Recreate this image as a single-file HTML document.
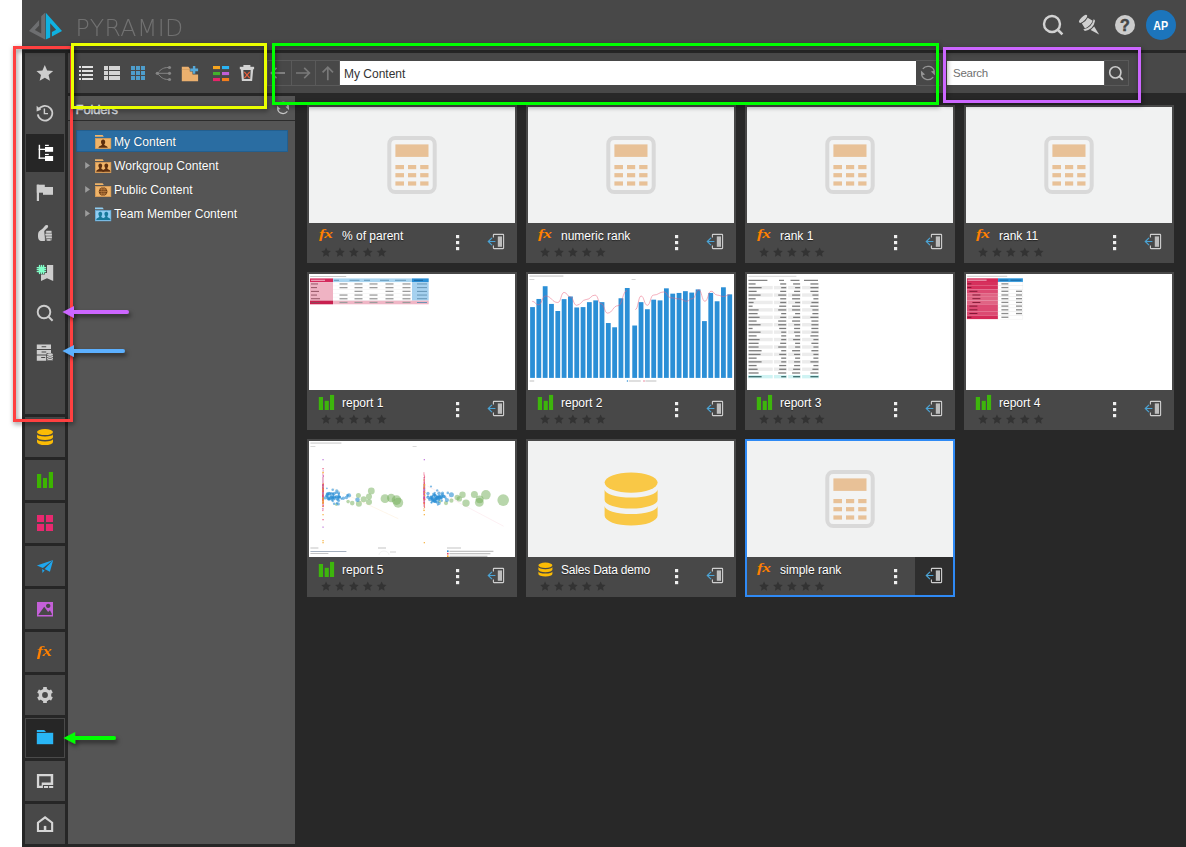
<!DOCTYPE html>
<html lang="en">
<head>
<meta charset="utf-8">
<title>Pyramid - Content Manager</title>
<style>
*{box-sizing:border-box;margin:0;padding:0}
html,body{width:1186px;height:847px;overflow:hidden;background:#fff}
body{position:relative;font-family:"Liberation Sans",sans-serif;font-size:13px;color:#fff}
svg{position:absolute;overflow:visible}
#app{position:absolute;left:22px;top:0;width:1164px;height:847px;background:#262626}
#content{position:absolute;left:295px;top:93px;width:891px;height:754px;background:#282828}
#content .card{margin-left:-295px;margin-top:-93px}
#hdr{position:absolute;left:22px;top:0;width:1164px;height:50px;background:#484848}
#hdr .brand{position:absolute;left:53.6px;top:11.7px;font-family:"DejaVu Sans","Liberation Sans",sans-serif;font-weight:200;font-size:23.6px;line-height:32px;color:#727272;letter-spacing:.4px;opacity:.999;will-change:opacity;white-space:nowrap}
#hdr .help{position:absolute;left:1093px;top:15px;width:20px;height:20px;border-radius:50%;background:#ccc;color:#454545;font-weight:bold;font-size:16px;line-height:22px;text-align:center;-webkit-text-stroke:.5px #454545}
#hdr .av{position:absolute;left:1124px;top:10px;width:30px;height:30px;border-radius:50%;background:#1c75bc;color:#fff;font-weight:bold;font-size:12.4px;line-height:33px;text-align:center}
#hdr .av span{display:inline-block;transform:scaleX(.86)}
#tb{position:absolute;left:68px;top:53px;width:1118px;height:40px;background:#484848}
.nav{position:absolute;top:7px;height:26px;border:1px solid #5a5a5a}
.inp{position:absolute;top:8px;height:24px;background:#fff;color:#333;font-size:12px;line-height:26.8px;padding-left:4px;white-space:nowrap}
#fold{position:absolute;left:68px;top:96px;width:227px;height:748px;background:#555}
#fold .hd{position:absolute;left:0;top:0;width:227px;height:25px;border-bottom:1px solid #2c2c2c}
#fold .hd span{position:absolute;left:7.6px;top:6px;font-size:13px;line-height:16px;color:#e4e8ee;-webkit-text-stroke:.35px #e4e8ee;letter-spacing:-.15px}
.cell{position:absolute;left:25px;width:40px;height:40px;background:#484848}
.cell.act{background:#262626;border:1px solid #4a4a4a}
.tr{position:absolute;left:0;width:227px;height:22px;font-size:12.1px;line-height:22px;color:#fff;white-space:nowrap;text-shadow:0 0 1px rgba(0,0,0,.4)}
.tr .lbl{position:absolute;left:46px;top:0}
.tr.sel{left:8px;width:212px;background:#2a6da2;border:1px solid #235f8f}
.tr.sel .lbl{left:37px;top:0}
.box{position:absolute;border:3px solid;filter:drop-shadow(1px 2.5px 2.6px rgba(0,0,0,.5))}
.card{position:absolute;width:210px;height:158px;background:#484848}
.card .th{position:absolute;left:2px;top:2px;width:206px;height:116px;background:#f1f2f2;overflow:hidden}
.card .th.w{background:#fff}
.card .nm{position:absolute;left:35px;top:123px;font-size:12px;line-height:16px;color:#fff;white-space:nowrap;text-shadow:0 1px 1px rgba(0,0,0,.5)}
.card .fx{position:absolute;left:12.4px;top:120.8px;font-family:"Liberation Serif",serif;font-style:italic;font-weight:bold;font-size:13.5px;line-height:16px;color:#ff8000;letter-spacing:-.3px;white-space:nowrap;transform:scaleX(1.28);transform-origin:0 0}
.card .opn{position:absolute;left:170px;top:118px;width:38px;height:38px;background:#2e2e2e}
.card .ring{position:absolute;left:0;top:0;width:210px;height:158px;border:2px solid #2f8af5}
</style>
</head>
<body>
<div id="app"></div>
<header id="hdr">
<span class="brand">PYRAMID</span>
<div class="help">?</div>
<div class="av"><span>AP</span></div>
</header>
<svg id="hdricons" style="left:0;top:0" width="1186" height="52" viewBox="0 0 1186 52">
<polygon fill="#6d6e70" points="45.0,12.85 41.2,16.15 41.2,33.4 34.9,30.1 39.1,25.4 39.1,19.9 29.0,31.0 45.0,39.5"/>
<polygon fill="#0fb1e0" points="45.8,12.85 62.0,31.0 51.9,36.45 51.9,31.9 56.1,29.85 50.2,23.2 50.2,37.4 45.8,39.5"/>
<circle cx="1052" cy="24" r="8" fill="none" stroke="#d2d2d2" stroke-width="2.4"/>
<line x1="1058" y1="30" x2="1062.4" y2="34.4" stroke="#d2d2d2" stroke-width="2.6"/>
<g fill="#d0d0d0" transform="translate(1088.4,24.2) rotate(-45) scale(1.18,1.02)">
<ellipse cx="0" cy="-7.4" rx="4.5" ry="2"/>
<path d="M-3.5,-5 Q0,-3.6 3.5,-5 L4.6,0.6 Q0,2.8 -4.6,0.6 Z"/>
<path d="M-6.3,0.2 Q0,5 6.3,0.2 L6.1,2.2 Q0,7 -6.1,2.2 Z"/>
<path d="M-2.1,5.6 L2.1,5.6 L0.2,14.6 Z"/>
</g>
</svg>
<nav id="side">
<div class="cell" style="top:53px;height:361px"></div>
<div class="cell act" style="left:26px;top:134px;width:38px;height:38px;border:0"></div>
<div class="cell" style="top:417px"></div>
<div class="cell" style="top:460px"></div>
<div class="cell" style="top:503px"></div>
<div class="cell" style="top:546px"></div>
<div class="cell" style="top:589px"></div>
<div class="cell" style="top:632px"></div>
<div class="cell" style="top:675px"></div>
<div class="cell act" style="top:718px"></div>
<div class="cell" style="top:761px"></div>
<div class="cell" style="top:804px"></div>
<svg id="sideicons" style="left:0;top:0" width="70" height="847" viewBox="0 0 70 847">
<!-- favorites -->
<polygon fill="#cdcdcd" points="44.80,64.90 47.15,70.46 53.17,70.98 48.60,74.94 49.97,80.82 44.80,77.70 39.63,80.82 41.00,74.94 36.43,70.98 42.45,70.46"/>
<!-- recent -->
<g fill="none" stroke="#cdcdcd" stroke-width="1.8">
<path d="M38.8,109.4 A7.3,7.3 0 1 1 37.8,114.4"/>
<path d="M44.4,108.6 V113.6 H48" stroke-width="1.4"/>
</g>
<polygon fill="#cdcdcd" points="36.6,105.8 41.2,109.8 36.6,111.4"/>
<!-- tree -->
<g fill="#fff">
<rect x="38.7" y="144.8" width="1.4" height="14"/>
<rect x="38.7" y="148.7" width="6.5" height="1.3"/>
<rect x="38.7" y="157.5" width="6.5" height="1.3"/>
<rect x="45" y="144.8" width="3.8" height="1.2"/>
<rect x="45" y="147" width="8.1" height="4.8"/>
<rect x="45" y="153.9" width="3.8" height="1.2"/>
<rect x="45" y="156" width="8.1" height="5"/>
</g>
<!-- flag -->
<g fill="#cdcdcd">
<rect x="36.8" y="184.7" width="2.2" height="16.3"/>
<rect x="36.8" y="184.7" width="8" height="8"/>
<rect x="43" y="187" width="10" height="7.8"/>
</g>
<!-- thumbs -->
<g fill="#cdcdcd">
<path d="M46.6,224.9 C47.6,224.9 48.3,225.4 48.1,226.4 C47.9,227.4 47.2,228.2 45.9,229.3 C44.8,230.2 44.3,230.8 44.3,231.8 L44.9,237.8 L44.9,241 L40.8,240.9 C39.2,240.4 38.3,239.4 38.1,237.4 C37.9,235.6 38,233.8 38.4,232.5 C39,231.2 40,230.6 41.2,229.8 C42.6,228.8 43.6,227.8 44.2,226.8 C44.8,225.8 45.4,224.9 46.6,224.9 Z"/>
<rect x="45.6" y="230.4" width="6.4" height="10.4" rx="1.2" fill="#7e7e7e"/>
<rect x="46.1" y="231" width="5.3" height="1.7" rx=".6"/>
<rect x="45.3" y="233.7" width="6.6" height="1.7" rx=".6"/>
<rect x="46.1" y="236.6" width="5.8" height="1.5" rx=".6"/>
<rect x="47" y="239.2" width="3.6" height="1.5" rx=".6"/>
</g>
<!-- bookmark -->
<polygon fill="#cdcdcd" points="47,264.9 53.2,264.9 53.2,281 47,278.2 41,281 41,274.6 44.9,274.6 44.9,272.9 47,272.9"/>
<g fill="#80ffc8">
<rect x="38.7" y="266.7" width="5.6" height="5.6"/>
<rect x="36.7" y="267" width="9.4" height="1.3"/>
<rect x="36.7" y="268.85" width="9.4" height="1.3"/>
<rect x="36.7" y="270.9" width="9.4" height="1.3"/>
<rect x="38.9" y="264.9" width="1.3" height="9.2"/>
<rect x="40.85" y="264.9" width="1.3" height="9.2"/>
<rect x="42.9" y="264.9" width="1.3" height="9.2"/>
</g>
<!-- search -->
<circle cx="44" cy="312" r="6.3" fill="none" stroke="#cdcdcd" stroke-width="1.9"/>
<line x1="48.6" y1="316.8" x2="52.6" y2="320.8" stroke="#cdcdcd" stroke-width="2"/>
<!-- data source mgr -->
<g fill="#cdcdcd">
<path d="M36.8,344.5 h14.2 v4.4 h-14.2 z M41.6,346.2 v1 h4.6 v-1 z" fill-rule="evenodd"/>
<path d="M36.8,350 h14.2 v3 h-4.4 v1.4 h-9.8 z M41.6,351.6 v1 h4.6 v-1 z" fill-rule="evenodd"/>
<path d="M36.8,355.5 h9.4 v5.3 h-9.4 z M41.2,357 v1 h4 v-1 z" fill-rule="evenodd"/>
<ellipse cx="50" cy="354.6" rx="3" ry="1.3"/>
<path d="M47,355.6 q3,1.8 6,0 v1.5 q-3,1.8 -6,0 z"/>
<path d="M47,357.8 q3,1.8 6,0 v1.5 q-3,1.8 -6,0 z"/>
<path d="M47,360 q3,1.8 6,0 v0.2 q-3,1.8 -6,0 z"/>
</g>
<!-- db yellow -->
<g fill="#fbbc05" transform="translate(37,429) scale(0.3019)">
<ellipse cx="26.5" cy="10.1" rx="26.5" ry="10.1"/>
<path d="M0,17 A26.5,8 0 0 0 53,17 L53,27.5 A26.5,8.6 0 0 1 0,27.5 Z"/>
<path d="M0,33.5 A26.5,8 0 0 0 53,33.5 L53,43 A26.5,10.1 0 0 1 0,43 Z"/>
</g>
<!-- bars green -->
<g fill="#3cb400">
<rect x="37" y="474" width="4.2" height="14"/>
<rect x="43" y="478" width="4" height="10"/>
<rect x="48.8" y="472" width="4.2" height="16"/>
</g>
<!-- grid pink -->
<g fill="#e8296f">
<rect x="37" y="515" width="7" height="7"/>
<rect x="46" y="515" width="7" height="7"/>
<rect x="37" y="524" width="7" height="7"/>
<rect x="46" y="524" width="7" height="7"/>
</g>
<!-- plane -->
<g fill="#1ea7f0">
<path d="M36.9,565.5 L53.2,559.9 L42.9,567.9 Z"/>
<path d="M53.2,559.9 L49.9,571.8 L44.6,568.9 Z"/>
<path d="M42.1,568.9 L44.6,570.4 L42.5,572.9 Z"/>
</g>
<!-- image -->
<path fill="#c460d8" fill-rule="evenodd" d="M37,602 h16 v14.4 h-16 z M38.2,614.9 L44.2,606.8 L48.1,612 L49.9,610.2 L51.8,613.8 V614.9 Z M48.2,603.7 a2.2,2.2 0 1 0 0.01,0 z"/>
<!-- gear -->
<g transform="translate(45,695)">
<circle r="4.6" fill="none" stroke="#cdcdcd" stroke-width="3.4"/>
<g fill="#cdcdcd">
<rect x="-1.9" y="-8" width="3.8" height="16" rx=".6"/>
<rect x="-1.9" y="-8" width="3.8" height="16" rx=".6" transform="rotate(60)"/>
<rect x="-1.9" y="-8" width="3.8" height="16" rx=".6" transform="rotate(120)"/>
</g>
<circle r="2.9" fill="#484848"/>
</g>
<!-- folder blue -->
<g fill="#29b6f6">
<path d="M36.8,730 h7.4 l1.8,2 h-9.2 z"/>
<rect x="36.8" y="732.8" width="16.4" height="11.4"/>
</g>
<!-- present -->
<path fill="#d6d6d6" fill-rule="evenodd" d="M36.9,774 H53.2 V785 H42.9 V788 H36.9 Z M39.2,776.3 H50.7 V782.6 H41.7 V785.7 H39.2 Z"/>
<rect x="44" y="786" width="4.1" height="2" fill="#d6d6d6"/>
<rect x="49.1" y="786" width="4.1" height="2" fill="#d6d6d6"/>
<!-- home -->
<path fill="none" stroke="#d6d6d6" stroke-width="2.1" d="M37.95,831 V822.7 L45.05,817.4 L52.15,822.7 V831 Z"/>
<rect x="43.8" y="825.9" width="2.5" height="5.2" fill="#d6d6d6"/>
</svg>
<span class="sfx" style="position:absolute;left:36.8px;top:641.6px;font-family:'Liberation Serif',serif;font-style:italic;font-weight:bold;font-size:14.5px;line-height:18px;color:#ff8000;letter-spacing:-.3px;white-space:nowrap;transform:scaleX(1.28);transform-origin:0 0">fx</span>
</nav>
<div id="tb">
<div class="nav" style="left:199px;width:25px"></div>
<div class="nav" style="left:223px;width:25px"></div>
<div class="nav" style="left:247px;width:25px"></div>
<div class="inp" style="left:272px;width:576px">My Content</div>
<div class="nav" style="left:848px;width:25px;border-left:0"></div>
<div class="inp" style="left:879px;width:157px;color:#707070;padding-left:6px;font-size:11.5px;letter-spacing:-.25px;line-height:25px">Search</div>
<div class="nav" style="left:1036px;width:25px"></div>
</div>
<svg id="tbicons" style="left:0;top:53px" width="1186" height="40" viewBox="0 53 1186 40">
<!-- list -->
<g fill="#e2e2e2">
<rect x="79" y="66" width="2" height="2"/><rect x="82" y="66" width="11" height="2"/>
<rect x="79" y="70" width="2" height="2"/><rect x="82" y="70" width="11" height="2"/>
<rect x="79" y="74" width="2" height="2"/><rect x="82" y="74" width="11" height="2"/>
<rect x="79" y="78" width="2" height="2"/><rect x="82" y="78" width="11" height="2"/>
</g>
<!-- details -->
<g fill="#d4d4d4">
<rect x="104" y="66" width="4" height="4"/><rect x="109" y="66" width="11" height="4"/>
<rect x="104" y="71" width="4" height="4"/><rect x="109" y="71" width="11" height="4"/>
<rect x="104" y="76" width="4" height="4"/><rect x="109" y="76" width="11" height="4"/>
</g>
<!-- thumbnails -->
<g fill="#4e9dcb">
<rect x="131" y="66" width="4" height="4"/><rect x="136" y="66" width="4" height="4"/><rect x="141" y="66" width="4" height="4"/>
<rect x="131" y="71" width="4" height="4"/><rect x="136" y="71" width="4" height="4"/><rect x="141" y="71" width="4" height="4"/>
<rect x="131" y="76" width="4" height="4"/><rect x="136" y="76" width="4" height="4"/><rect x="141" y="76" width="4" height="4"/>
</g>
<!-- structure -->
<g fill="none" stroke="#858585" stroke-width="1">
<path d="M157.4,73.3 H168"/>
<path d="M157.4,73.3 C161,69 163.5,67.6 168,67.5"/>
<path d="M157.4,73.3 C161,77.6 163.5,79.4 168,79.5"/>
</g>
<g fill="#858585">
<circle cx="157.3" cy="73.3" r="1.6"/><circle cx="169.5" cy="67.5" r="1.6"/><circle cx="169.5" cy="73.3" r="1.6"/><circle cx="169.5" cy="79.5" r="1.6"/>
</g>
<!-- new folder -->
<path fill="#ebb06e" d="M181.8,66.7 H188.4 L189.8,68.4 V71.6 H192.5 V74.6 H198.1 V81.2 H181.8 Z"/>
<rect x="181.8" y="69.1" width="8" height=".6" fill="#cf9a5c"/>
<path fill="#56a8d8" d="M192.9,66 H195.3 V68.6 H198.1 V71.2 H195.3 V73.8 H192.9 V71.2 H190.2 V68.6 H192.9 Z"/>
<!-- colour tags -->
<rect x="213" y="66" width="7" height="3.1" fill="#f6a51e"/><rect x="222" y="66" width="7.1" height="3.1" fill="#2ab4f5"/>
<rect x="213" y="72" width="7" height="3.1" fill="#45b02c"/><rect x="222" y="72" width="7.1" height="3.1" fill="#c15fd6"/>
<rect x="213" y="78" width="7" height="3.1" fill="#e8256a"/><rect x="222" y="78" width="7.1" height="3.1" fill="#f57d1c"/>
<!-- delete -->
<rect x="243.4" y="65" width="7" height="2.4" fill="#d2d2d2"/>
<rect x="239.8" y="66.8" width="14.3" height="2.4" fill="#d2d2d2"/>
<path d="M240.7,68.6 H253.3 L252.1,81.1 H241.9 Z" fill="#d2d2d2"/>
<path d="M243.3,70 H250.7 L250.2,79 H243.8 Z" fill="#454545"/>
<path d="M244.3,71.8 L249.7,78.2 M249.7,71.8 L244.3,78.2" stroke="#f0603c" stroke-width="1.1" fill="none"/>
<!-- nav arrows -->
<g fill="none" stroke="#797979" stroke-width="1.7">
<path stroke="#929292" d="M271.6,73 H285 M276.6,67.8 L271.4,73 L276.6,78.2"/>
<path d="M296,73 H309.2 M304.2,67.8 L309.4,73 L304.2,78.2"/>
<path d="M327.8,80.2 V67.2 M322.6,72.4 L327.8,67.2 L333,72.4"/>
</g>
<!-- refresh -->
<g fill="none" stroke="#969696" stroke-width="1.3">
<path d="M922.80,68.90 A6.60,6.60 0 0 1 934.30,71.00"/>
<path d="M933.20,77.10 A6.60,6.60 0 0 1 921.70,75.00"/>
</g>
<polygon fill="#969696" points="930.90,71.60 934.90,70.40 935.10,75.40"/>
<polygon fill="#969696" points="925.10,74.40 921.10,75.60 920.90,70.60"/>
<!-- search btn -->
<circle cx="1115.3" cy="72.4" r="5.6" fill="none" stroke="#cbcbcb" stroke-width="1.6"/>
<line x1="1119.3" y1="76.4" x2="1122.8" y2="79.9" stroke="#cbcbcb" stroke-width="1.9"/>
</svg>
<aside id="fold">
<div class="hd"><span>Folders</span></div>
<div class="tr sel" style="top:34px"><span class="lbl">My Content</span></div>
<div class="tr" style="top:58.5px"><span class="lbl">Workgroup Content</span></div>
<div class="tr" style="top:82.5px"><span class="lbl">Public Content</span></div>
<div class="tr" style="top:106.5px"><span class="lbl">Team Member Content</span></div>
</aside>
<svg id="foldicons" style="left:68px;top:96px" width="227" height="140" viewBox="68 96 227 140">
<!-- header refresh -->
<g fill="none" stroke="#c9c9c9" stroke-width="1.2">
<path d="M278.59,104.42 A5.60,5.60 0 0 1 288.35,106.20"/>
<path d="M287.41,111.38 A5.60,5.60 0 0 1 277.65,109.60"/>
</g>
<polygon fill="#c9c9c9" points="285.46,106.71 288.85,105.69 289.02,109.94"/>
<polygon fill="#c9c9c9" points="280.54,109.09 277.15,110.11 276.98,105.86"/>
<!-- expanders -->
<g fill="#9c9c9c">
<polygon points="85.2,162 90,165.4 85.2,168.8"/>
<polygon points="85.2,186 90,189.4 85.2,192.8"/>
<polygon points="85.2,210 90,213.4 85.2,216.8"/>
</g>
<!-- folder: my content -->
<g>
<path fill="#f0b468" d="M95,135 H102.6 L103.8,136.8 H95 Z"/>
<rect x="95.3" y="138.3" width="15.6" height="10.4" fill="#f0b468" stroke="#de9c52" stroke-width=".6"/>
<path fill="#5c2e0e" d="M103.1,139.6 c1.4,0 2.1,1 2.1,2.3 c0,1 -0.5,1.9 -1,2.4 c0,0.8 0.6,1.2 1.8,1.6 c1.1,0.4 1.7,0.9 1.7,1.9 H98.5 c0,-1 0.6,-1.5 1.7,-1.9 c1.2,-0.4 1.8,-0.8 1.8,-1.6 c-0.5,-0.5 -1,-1.4 -1,-2.4 c0,-1.3 0.7,-2.3 2.1,-2.3 Z"/>
</g>
<!-- folder: workgroup -->
<g>
<path fill="#f0b468" d="M95,159.2 H102.6 L103.8,161 H95 Z"/>
<rect x="95.3" y="162.3" width="15.6" height="10.4" fill="#f0b468" stroke="#de9c52" stroke-width=".6"/>
<path fill="#5c2e0e" d="M100.3,163.6 c1.3,0 1.9,1 1.9,2.2 c0,1 -0.4,1.8 -0.9,2.3 c0,0.8 0.5,1.2 1.6,1.6 c1,0.4 1.5,0.9 1.5,2.1 H96.2 c0,-1.2 0.5,-1.7 1.5,-2.1 c1.1,-0.4 1.6,-0.8 1.6,-1.6 c-0.5,-0.5 -0.9,-1.3 -0.9,-2.3 c0,-1.2 0.6,-2.2 1.9,-2.2 Z"/>
<path fill="#5c2e0e" d="M106.3,163.6 c1.3,0 1.9,1 1.9,2.2 c0,1 -0.4,1.8 -0.9,2.3 c0,0.8 0.5,1.2 1.6,1.6 c1,0.4 1.5,0.9 1.5,2.1 H102.2 c0,-1.2 0.5,-1.7 1.5,-2.1 c1.1,-0.4 1.6,-0.8 1.6,-1.6 c-0.5,-0.5 -0.9,-1.3 -0.9,-2.3 c0,-1.2 0.6,-2.2 1.9,-2.2 Z"/>
</g>
<!-- folder: public -->
<g>
<path fill="#f0b468" d="M95,183.2 H102.6 L103.8,185 H95 Z"/>
<rect x="95.3" y="186.3" width="15.6" height="10.4" fill="#f0b468" stroke="#de9c52" stroke-width=".6"/>
<circle cx="103.1" cy="191.5" r="4.3" fill="#6a3a14"/>
<g fill="none" stroke="#c98a48" stroke-width=".6">
<ellipse cx="103.1" cy="191.5" rx="2" ry="4.3"/>
<path d="M98.8,191.5 H107.4 M103.1,187.2 V195.8 M99.6,189.2 H106.6 M99.6,193.8 H106.6"/>
</g>
</g>
<!-- folder: team -->
<g>
<path fill="#8fcdf2" d="M95,207.4 H102.6 L103.8,209.2 H95 Z"/>
<rect x="95.3" y="210.5" width="15.6" height="10.4" fill="#8fcdf2" stroke="#62b0e2" stroke-width=".6"/>
<path fill="#17799b" d="M100.3,211.8 c1.3,0 1.9,1 1.9,2.2 c0,1 -0.4,1.8 -0.9,2.3 c0,0.8 0.5,1.2 1.6,1.6 c1,0.4 1.5,0.9 1.5,2.1 H96.2 c0,-1.2 0.5,-1.7 1.5,-2.1 c1.1,-0.4 1.6,-0.8 1.6,-1.6 c-0.5,-0.5 -0.9,-1.3 -0.9,-2.3 c0,-1.2 0.6,-2.2 1.9,-2.2 Z"/>
<path fill="#17799b" d="M106.3,211.8 c1.3,0 1.9,1 1.9,2.2 c0,1 -0.4,1.8 -0.9,2.3 c0,0.8 0.5,1.2 1.6,1.6 c1,0.4 1.5,0.9 1.5,2.1 H102.2 c0,-1.2 0.5,-1.7 1.5,-2.1 c1.1,-0.4 1.6,-0.8 1.6,-1.6 c-0.5,-0.5 -0.9,-1.3 -0.9,-2.3 c0,-1.2 0.6,-2.2 1.9,-2.2 Z"/>
</g>
</svg>
<main id="content">
<div class="card" style="left:307px;top:105px"><div class="th"><svg style="left:0;top:0" width="206" height="116" viewBox="0 0 206 116"><rect x="80.3" y="31" width="45.4" height="54" rx="6" fill="#f3f4f4" stroke="#d9d9d9" stroke-width="4"/><rect x="86.4" y="37.4" width="33.1" height="12.5" fill="#e8c197"/><rect x="86.4" y="58.0" width="8.6" height="4.2" fill="#e8c197"/><rect x="99.0" y="58.0" width="8.2" height="4.2" fill="#e8c197"/><rect x="111.2" y="58.0" width="8.3" height="4.2" fill="#e8c197"/><rect x="86.4" y="66.1" width="8.6" height="4.2" fill="#e8c197"/><rect x="99.0" y="66.1" width="8.2" height="4.2" fill="#e8c197"/><rect x="111.2" y="66.1" width="8.3" height="4.2" fill="#e8c197"/><rect x="86.4" y="74.4" width="8.6" height="4.2" fill="#e8c197"/><rect x="99.0" y="74.4" width="8.2" height="4.2" fill="#e8c197"/><rect x="111.2" y="74.4" width="8.3" height="4.2" fill="#e8c197"/></svg></div><span class="fx">fx</span><span class="nm">% of parent</span><svg class="rate" style="left:0;top:0" width="100" height="158" viewBox="0 0 100 158"><g fill="#333"><polygon points="19.05,142.50 20.52,145.58 23.90,146.02 21.43,148.37 22.05,151.73 19.05,150.10 16.05,151.73 16.67,148.37 14.20,146.02 17.58,145.58"/><polygon points="32.95,142.50 34.42,145.58 37.80,146.02 35.33,148.37 35.95,151.73 32.95,150.10 29.95,151.73 30.57,148.37 28.10,146.02 31.48,145.58"/><polygon points="46.85,142.50 48.32,145.58 51.70,146.02 49.23,148.37 49.85,151.73 46.85,150.10 43.85,151.73 44.47,148.37 42.00,146.02 45.38,145.58"/><polygon points="60.75,142.50 62.22,145.58 65.60,146.02 63.13,148.37 63.75,151.73 60.75,150.10 57.75,151.73 58.37,148.37 55.90,146.02 59.28,145.58"/><polygon points="74.65,142.50 76.12,145.58 79.50,146.02 77.03,148.37 77.65,151.73 74.65,150.10 71.65,151.73 72.27,148.37 69.80,146.02 73.18,145.58"/></g></svg><svg class="act" style="left:0;top:0" width="210" height="158" viewBox="0 0 210 158"><g fill="#efefef"><rect x="149" y="130" width="3.2" height="3.2"/><rect x="149" y="136" width="3.2" height="3.2"/><rect x="149" y="142" width="3.2" height="3.2"/></g><path d="M186.4,132.6 V130 Q186.4,129.4 187,129.4 H196 Q196.6,129.4 196.6,130 V143 Q196.6,143.6 196,143.6 H187 Q186.4,143.6 186.4,143 V140.4" fill="none" stroke="#d0d0d0" stroke-width="1.1"/><rect x="190.8" y="131.4" width="4.2" height="10.4" fill="#bdbdbd"/><path d="M181.4,136.5 H188.4 M185,132.8 L181.3,136.5 L185,140.2" fill="none" stroke="#4ba3d4" stroke-width="1.2"/></svg></div>
<div class="card" style="left:526px;top:105px"><div class="th"><svg style="left:0;top:0" width="206" height="116" viewBox="0 0 206 116"><rect x="80.3" y="31" width="45.4" height="54" rx="6" fill="#f3f4f4" stroke="#d9d9d9" stroke-width="4"/><rect x="86.4" y="37.4" width="33.1" height="12.5" fill="#e8c197"/><rect x="86.4" y="58.0" width="8.6" height="4.2" fill="#e8c197"/><rect x="99.0" y="58.0" width="8.2" height="4.2" fill="#e8c197"/><rect x="111.2" y="58.0" width="8.3" height="4.2" fill="#e8c197"/><rect x="86.4" y="66.1" width="8.6" height="4.2" fill="#e8c197"/><rect x="99.0" y="66.1" width="8.2" height="4.2" fill="#e8c197"/><rect x="111.2" y="66.1" width="8.3" height="4.2" fill="#e8c197"/><rect x="86.4" y="74.4" width="8.6" height="4.2" fill="#e8c197"/><rect x="99.0" y="74.4" width="8.2" height="4.2" fill="#e8c197"/><rect x="111.2" y="74.4" width="8.3" height="4.2" fill="#e8c197"/></svg></div><span class="fx">fx</span><span class="nm">numeric rank</span><svg class="rate" style="left:0;top:0" width="100" height="158" viewBox="0 0 100 158"><g fill="#333"><polygon points="19.05,142.50 20.52,145.58 23.90,146.02 21.43,148.37 22.05,151.73 19.05,150.10 16.05,151.73 16.67,148.37 14.20,146.02 17.58,145.58"/><polygon points="32.95,142.50 34.42,145.58 37.80,146.02 35.33,148.37 35.95,151.73 32.95,150.10 29.95,151.73 30.57,148.37 28.10,146.02 31.48,145.58"/><polygon points="46.85,142.50 48.32,145.58 51.70,146.02 49.23,148.37 49.85,151.73 46.85,150.10 43.85,151.73 44.47,148.37 42.00,146.02 45.38,145.58"/><polygon points="60.75,142.50 62.22,145.58 65.60,146.02 63.13,148.37 63.75,151.73 60.75,150.10 57.75,151.73 58.37,148.37 55.90,146.02 59.28,145.58"/><polygon points="74.65,142.50 76.12,145.58 79.50,146.02 77.03,148.37 77.65,151.73 74.65,150.10 71.65,151.73 72.27,148.37 69.80,146.02 73.18,145.58"/></g></svg><svg class="act" style="left:0;top:0" width="210" height="158" viewBox="0 0 210 158"><g fill="#efefef"><rect x="149" y="130" width="3.2" height="3.2"/><rect x="149" y="136" width="3.2" height="3.2"/><rect x="149" y="142" width="3.2" height="3.2"/></g><path d="M186.4,132.6 V130 Q186.4,129.4 187,129.4 H196 Q196.6,129.4 196.6,130 V143 Q196.6,143.6 196,143.6 H187 Q186.4,143.6 186.4,143 V140.4" fill="none" stroke="#d0d0d0" stroke-width="1.1"/><rect x="190.8" y="131.4" width="4.2" height="10.4" fill="#bdbdbd"/><path d="M181.4,136.5 H188.4 M185,132.8 L181.3,136.5 L185,140.2" fill="none" stroke="#4ba3d4" stroke-width="1.2"/></svg></div>
<div class="card" style="left:745px;top:105px"><div class="th"><svg style="left:0;top:0" width="206" height="116" viewBox="0 0 206 116"><rect x="80.3" y="31" width="45.4" height="54" rx="6" fill="#f3f4f4" stroke="#d9d9d9" stroke-width="4"/><rect x="86.4" y="37.4" width="33.1" height="12.5" fill="#e8c197"/><rect x="86.4" y="58.0" width="8.6" height="4.2" fill="#e8c197"/><rect x="99.0" y="58.0" width="8.2" height="4.2" fill="#e8c197"/><rect x="111.2" y="58.0" width="8.3" height="4.2" fill="#e8c197"/><rect x="86.4" y="66.1" width="8.6" height="4.2" fill="#e8c197"/><rect x="99.0" y="66.1" width="8.2" height="4.2" fill="#e8c197"/><rect x="111.2" y="66.1" width="8.3" height="4.2" fill="#e8c197"/><rect x="86.4" y="74.4" width="8.6" height="4.2" fill="#e8c197"/><rect x="99.0" y="74.4" width="8.2" height="4.2" fill="#e8c197"/><rect x="111.2" y="74.4" width="8.3" height="4.2" fill="#e8c197"/></svg></div><span class="fx">fx</span><span class="nm">rank 1</span><svg class="rate" style="left:0;top:0" width="100" height="158" viewBox="0 0 100 158"><g fill="#333"><polygon points="19.05,142.50 20.52,145.58 23.90,146.02 21.43,148.37 22.05,151.73 19.05,150.10 16.05,151.73 16.67,148.37 14.20,146.02 17.58,145.58"/><polygon points="32.95,142.50 34.42,145.58 37.80,146.02 35.33,148.37 35.95,151.73 32.95,150.10 29.95,151.73 30.57,148.37 28.10,146.02 31.48,145.58"/><polygon points="46.85,142.50 48.32,145.58 51.70,146.02 49.23,148.37 49.85,151.73 46.85,150.10 43.85,151.73 44.47,148.37 42.00,146.02 45.38,145.58"/><polygon points="60.75,142.50 62.22,145.58 65.60,146.02 63.13,148.37 63.75,151.73 60.75,150.10 57.75,151.73 58.37,148.37 55.90,146.02 59.28,145.58"/><polygon points="74.65,142.50 76.12,145.58 79.50,146.02 77.03,148.37 77.65,151.73 74.65,150.10 71.65,151.73 72.27,148.37 69.80,146.02 73.18,145.58"/></g></svg><svg class="act" style="left:0;top:0" width="210" height="158" viewBox="0 0 210 158"><g fill="#efefef"><rect x="149" y="130" width="3.2" height="3.2"/><rect x="149" y="136" width="3.2" height="3.2"/><rect x="149" y="142" width="3.2" height="3.2"/></g><path d="M186.4,132.6 V130 Q186.4,129.4 187,129.4 H196 Q196.6,129.4 196.6,130 V143 Q196.6,143.6 196,143.6 H187 Q186.4,143.6 186.4,143 V140.4" fill="none" stroke="#d0d0d0" stroke-width="1.1"/><rect x="190.8" y="131.4" width="4.2" height="10.4" fill="#bdbdbd"/><path d="M181.4,136.5 H188.4 M185,132.8 L181.3,136.5 L185,140.2" fill="none" stroke="#4ba3d4" stroke-width="1.2"/></svg></div>
<div class="card" style="left:964px;top:105px"><div class="th"><svg style="left:0;top:0" width="206" height="116" viewBox="0 0 206 116"><rect x="80.3" y="31" width="45.4" height="54" rx="6" fill="#f3f4f4" stroke="#d9d9d9" stroke-width="4"/><rect x="86.4" y="37.4" width="33.1" height="12.5" fill="#e8c197"/><rect x="86.4" y="58.0" width="8.6" height="4.2" fill="#e8c197"/><rect x="99.0" y="58.0" width="8.2" height="4.2" fill="#e8c197"/><rect x="111.2" y="58.0" width="8.3" height="4.2" fill="#e8c197"/><rect x="86.4" y="66.1" width="8.6" height="4.2" fill="#e8c197"/><rect x="99.0" y="66.1" width="8.2" height="4.2" fill="#e8c197"/><rect x="111.2" y="66.1" width="8.3" height="4.2" fill="#e8c197"/><rect x="86.4" y="74.4" width="8.6" height="4.2" fill="#e8c197"/><rect x="99.0" y="74.4" width="8.2" height="4.2" fill="#e8c197"/><rect x="111.2" y="74.4" width="8.3" height="4.2" fill="#e8c197"/></svg></div><span class="fx">fx</span><span class="nm">rank 11</span><svg class="rate" style="left:0;top:0" width="100" height="158" viewBox="0 0 100 158"><g fill="#333"><polygon points="19.05,142.50 20.52,145.58 23.90,146.02 21.43,148.37 22.05,151.73 19.05,150.10 16.05,151.73 16.67,148.37 14.20,146.02 17.58,145.58"/><polygon points="32.95,142.50 34.42,145.58 37.80,146.02 35.33,148.37 35.95,151.73 32.95,150.10 29.95,151.73 30.57,148.37 28.10,146.02 31.48,145.58"/><polygon points="46.85,142.50 48.32,145.58 51.70,146.02 49.23,148.37 49.85,151.73 46.85,150.10 43.85,151.73 44.47,148.37 42.00,146.02 45.38,145.58"/><polygon points="60.75,142.50 62.22,145.58 65.60,146.02 63.13,148.37 63.75,151.73 60.75,150.10 57.75,151.73 58.37,148.37 55.90,146.02 59.28,145.58"/><polygon points="74.65,142.50 76.12,145.58 79.50,146.02 77.03,148.37 77.65,151.73 74.65,150.10 71.65,151.73 72.27,148.37 69.80,146.02 73.18,145.58"/></g></svg><svg class="act" style="left:0;top:0" width="210" height="158" viewBox="0 0 210 158"><g fill="#efefef"><rect x="149" y="130" width="3.2" height="3.2"/><rect x="149" y="136" width="3.2" height="3.2"/><rect x="149" y="142" width="3.2" height="3.2"/></g><path d="M186.4,132.6 V130 Q186.4,129.4 187,129.4 H196 Q196.6,129.4 196.6,130 V143 Q196.6,143.6 196,143.6 H187 Q186.4,143.6 186.4,143 V140.4" fill="none" stroke="#d0d0d0" stroke-width="1.1"/><rect x="190.8" y="131.4" width="4.2" height="10.4" fill="#bdbdbd"/><path d="M181.4,136.5 H188.4 M185,132.8 L181.3,136.5 L185,140.2" fill="none" stroke="#4ba3d4" stroke-width="1.2"/></svg></div>
<div class="card" style="left:307px;top:272px"><div class="th w"><svg style="left:0;top:0" width="206" height="116" viewBox="0 0 206 116"><rect x="1.2" y="2" width="36" height="1" fill="#c8c8c8"/><rect x="1" y="4.4" width="23" height="3.7" fill="#d42a5c"/><rect x="24" y="4.4" width="79" height="3.7" fill="#a9d5f0"/><rect x="103" y="4.4" width="16.7" height="3.7" fill="#2a8fd6"/><rect x="1" y="8.1" width="23" height="18.5" fill="#efb3c3"/><rect x="103" y="8.1" width="16.7" height="18.5" fill="#a6d1ef"/><rect x="1" y="26.6" width="23" height="3.7" fill="#c8204f"/><rect x="24" y="26.6" width="95.7" height="3.7" fill="#f0b6c6"/><rect x="2" y="5.8" width="14" height=".9" fill="#f6c8d4"/><rect x="25" y="5.8" width="5" height=".9" fill="#5f8fb0"/><rect x="40.5" y="5.8" width="10" height=".9" fill="#5f8fb0"/><rect x="55" y="5.8" width="6" height=".9" fill="#5f8fb0"/><rect x="71" y="5.8" width="9" height=".9" fill="#5f8fb0"/><rect x="86" y="5.8" width="11" height=".9" fill="#5f8fb0"/><rect x="105" y="5.8" width="9" height=".9" fill="#1a5f96"/><rect x="2" y="9.5" width="7" height=".9" fill="#8a4a5a"/><rect x="30.5" y="9.3" width="8" height="1.3" fill="#9c9c9c"/><rect x="45.5" y="9.3" width="8" height="1.3" fill="#9c9c9c"/><rect x="60.5" y="9.3" width="8" height="1.3" fill="#9c9c9c"/><rect x="76.5" y="9.3" width="8" height="1.3" fill="#9c9c9c"/><rect x="93.5" y="9.3" width="8" height="1.3" fill="#9c9c9c"/><rect x="108" y="9.5" width="10" height=".9" fill="#5f8fb0"/><rect x="2" y="13.2" width="6" height=".9" fill="#8a4a5a"/><rect x="30.5" y="13.0" width="8" height="1.3" fill="#9c9c9c"/><rect x="45.5" y="13.0" width="8" height="1.3" fill="#9c9c9c"/><rect x="60.5" y="13.0" width="8" height="1.3" fill="#9c9c9c"/><rect x="76.5" y="13.0" width="8" height="1.3" fill="#9c9c9c"/><rect x="93.5" y="13.0" width="8" height="1.3" fill="#9c9c9c"/><rect x="108" y="13.2" width="10" height=".9" fill="#5f8fb0"/><rect x="2" y="16.9" width="8" height=".9" fill="#8a4a5a"/><rect x="45.5" y="16.7" width="8" height="1.3" fill="#9c9c9c"/><rect x="76.5" y="16.7" width="8" height="1.3" fill="#9c9c9c"/><rect x="93.5" y="16.7" width="8" height="1.3" fill="#9c9c9c"/><rect x="108" y="16.9" width="10" height=".9" fill="#5f8fb0"/><rect x="2" y="20.6" width="6" height=".9" fill="#8a4a5a"/><rect x="30.5" y="20.4" width="8" height="1.3" fill="#9c9c9c"/><rect x="45.5" y="20.4" width="8" height="1.3" fill="#9c9c9c"/><rect x="60.5" y="20.4" width="8" height="1.3" fill="#9c9c9c"/><rect x="76.5" y="20.4" width="8" height="1.3" fill="#9c9c9c"/><rect x="93.5" y="20.4" width="8" height="1.3" fill="#9c9c9c"/><rect x="108" y="20.6" width="10" height=".9" fill="#5f8fb0"/><rect x="2" y="24.3" width="9" height=".9" fill="#8a4a5a"/><rect x="30.5" y="24.1" width="8" height="1.3" fill="#9c9c9c"/><rect x="45.5" y="24.1" width="8" height="1.3" fill="#9c9c9c"/><rect x="60.5" y="24.1" width="8" height="1.3" fill="#9c9c9c"/><rect x="76.5" y="24.1" width="8" height="1.3" fill="#9c9c9c"/><rect x="93.5" y="24.1" width="8" height="1.3" fill="#9c9c9c"/><rect x="108" y="24.3" width="10" height=".9" fill="#5f8fb0"/><rect x="2" y="28.0" width="9" height=".9" fill="#8a4a5a"/><rect x="30.5" y="27.8" width="8" height="1.3" fill="#9c9c9c"/><rect x="45.5" y="27.8" width="8" height="1.3" fill="#9c9c9c"/><rect x="60.5" y="27.8" width="8" height="1.3" fill="#9c9c9c"/><rect x="76.5" y="27.8" width="8" height="1.3" fill="#9c9c9c"/><rect x="93.5" y="27.8" width="8" height="1.3" fill="#9c9c9c"/><rect x="108" y="28.0" width="10" height=".9" fill="#5f8fb0"/><rect x="24" y="11.80" width="79" height=".3" fill="#e4e4e4"/><rect x="24" y="15.50" width="79" height=".3" fill="#e4e4e4"/><rect x="24" y="19.20" width="79" height=".3" fill="#e4e4e4"/><rect x="24" y="22.90" width="79" height=".3" fill="#e4e4e4"/><rect x="24" y="26.60" width="79" height=".3" fill="#e4e4e4"/></svg></div><svg style="left:0;top:0" width="40" height="158" viewBox="0 0 40 158"><g fill="#3db60c"><rect x="11.8" y="125" width="4.2" height="13"/><rect x="17.7" y="128.8" width="4.1" height="9.2"/><rect x="23" y="122.9" width="4.1" height="15.1"/></g></svg><span class="nm">report 1</span><svg class="rate" style="left:0;top:0" width="100" height="158" viewBox="0 0 100 158"><g fill="#333"><polygon points="19.05,142.50 20.52,145.58 23.90,146.02 21.43,148.37 22.05,151.73 19.05,150.10 16.05,151.73 16.67,148.37 14.20,146.02 17.58,145.58"/><polygon points="32.95,142.50 34.42,145.58 37.80,146.02 35.33,148.37 35.95,151.73 32.95,150.10 29.95,151.73 30.57,148.37 28.10,146.02 31.48,145.58"/><polygon points="46.85,142.50 48.32,145.58 51.70,146.02 49.23,148.37 49.85,151.73 46.85,150.10 43.85,151.73 44.47,148.37 42.00,146.02 45.38,145.58"/><polygon points="60.75,142.50 62.22,145.58 65.60,146.02 63.13,148.37 63.75,151.73 60.75,150.10 57.75,151.73 58.37,148.37 55.90,146.02 59.28,145.58"/><polygon points="74.65,142.50 76.12,145.58 79.50,146.02 77.03,148.37 77.65,151.73 74.65,150.10 71.65,151.73 72.27,148.37 69.80,146.02 73.18,145.58"/></g></svg><svg class="act" style="left:0;top:0" width="210" height="158" viewBox="0 0 210 158"><g fill="#efefef"><rect x="149" y="130" width="3.2" height="3.2"/><rect x="149" y="136" width="3.2" height="3.2"/><rect x="149" y="142" width="3.2" height="3.2"/></g><path d="M186.4,132.6 V130 Q186.4,129.4 187,129.4 H196 Q196.6,129.4 196.6,130 V143 Q196.6,143.6 196,143.6 H187 Q186.4,143.6 186.4,143 V140.4" fill="none" stroke="#d0d0d0" stroke-width="1.1"/><rect x="190.8" y="131.4" width="4.2" height="10.4" fill="#bdbdbd"/><path d="M181.4,136.5 H188.4 M185,132.8 L181.3,136.5 L185,140.2" fill="none" stroke="#4ba3d4" stroke-width="1.2"/></svg></div>
<div class="card" style="left:526px;top:272px"><div class="th w"><svg style="left:0;top:0" width="206" height="116" viewBox="0 0 206 116"><rect x="1.4" y="1.6" width="34" height=".9" fill="#b8b8b8"/><rect x="1.4" y="5.2" width="5" height=".7" fill="#c4c4c4"/><rect x="103.6" y="5.2" width="4" height=".7" fill="#c4c4c4"/><g fill="#2b8fd6"><rect x="2.12" y="33.11" width="4.8" height="70.79"/><rect x="8.44" y="24.96" width="4.8" height="78.94"/><rect x="14.76" y="12.22" width="4.8" height="91.68"/><rect x="21.07" y="29.92" width="4.8" height="73.98"/><rect x="27.39" y="37.00" width="4.8" height="66.90"/><rect x="33.70" y="25.14" width="4.8" height="78.76"/><rect x="40.02" y="22.49" width="4.8" height="81.41"/><rect x="46.33" y="33.46" width="4.8" height="70.44"/><rect x="52.65" y="33.11" width="4.8" height="70.79"/><rect x="58.96" y="28.15" width="4.8" height="75.75"/><rect x="65.28" y="26.38" width="4.8" height="77.52"/><rect x="71.60" y="28.15" width="4.8" height="75.75"/><rect x="77.91" y="49.04" width="4.8" height="54.86"/><rect x="84.23" y="53.29" width="4.8" height="50.61"/><rect x="90.54" y="24.26" width="4.8" height="79.64"/><rect x="96.86" y="13.99" width="4.8" height="89.91"/><rect x="104.28" y="51.52" width="4.8" height="52.38"/><rect x="110.62" y="28.15" width="4.8" height="75.75"/><rect x="116.96" y="35.23" width="4.8" height="68.67"/><rect x="123.30" y="25.67" width="4.8" height="78.23"/><rect x="129.64" y="26.38" width="4.8" height="77.52"/><rect x="135.98" y="14.34" width="4.8" height="89.56"/><rect x="142.32" y="19.65" width="4.8" height="84.25"/><rect x="148.65" y="18.94" width="4.8" height="84.96"/><rect x="154.99" y="17.17" width="4.8" height="86.73"/><rect x="161.33" y="18.59" width="4.8" height="85.31"/><rect x="167.67" y="15.40" width="4.8" height="88.50"/><rect x="174.01" y="47.10" width="4.8" height="56.80"/><rect x="180.35" y="18.94" width="4.8" height="84.96"/><rect x="186.69" y="27.27" width="4.8" height="76.63"/><rect x="193.02" y="13.28" width="4.8" height="90.62"/><rect x="199.36" y="20.36" width="4.8" height="83.54"/></g><path d="M4.2,27.3 C7.3,27.3 7.3,30.8 10.4,30.8 C14.0,30.8 14.0,22.0 17.5,22.0 C23.7,22.0 23.7,28.5 29.9,28.5 C33.0,28.5 33.0,18.4 36.1,18.4 C39.2,18.4 39.2,22.8 42.3,22.8 C45.4,22.8 45.4,31.3 48.5,31.3 C53.4,31.3 53.4,25.5 58.3,25.5 C62.7,25.5 62.7,21.1 67.1,21.1 C70.2,21.1 70.2,29.9 73.3,29.9 C76.4,29.9 76.4,39.1 79.5,39.1 C84.8,39.1 84.8,31.7 90.1,31.7 C94.5,31.7 94.5,16.6 99.0,16.6" fill="none" stroke="#e8607c" stroke-width=".5"/><path d="M107.3,35.6 C110.2,35.6 110.2,22.0 113.1,22.0 C116.2,22.0 116.2,31.3 119.3,31.3 C122.4,31.3 122.4,21.1 125.5,21.1 C130.8,21.1 130.8,17.9 136.2,17.9 C139.3,17.9 139.3,23.7 142.4,23.7 C147.2,23.7 147.2,25.0 152.1,25.0 C155.2,25.0 155.2,27.3 158.3,27.3 C161.4,27.3 161.4,24.6 164.5,24.6 C167.6,24.6 167.6,15.8 170.7,15.8 C173.8,15.8 173.8,27.3 176.9,27.3 C180.0,27.3 180.0,17.2 183.1,17.2 C186.2,17.2 186.2,21.1 189.3,21.1 C192.4,21.1 192.4,22.5 195.5,22.5 C198.6,22.5 198.6,20.7 201.7,20.7" fill="none" stroke="#e8607c" stroke-width=".5"/><rect x="1.6" y="106.6" width="4.6" height=".8" fill="#b0b0b0"/><circle cx="99.4" cy="107" r=".7" fill="#2b8fd6"/><rect x="100.8" y="106.6" width="12" height=".8" fill="#b0b0b0"/><circle cx="116" cy="107" r=".7" fill="#e8607c"/><rect x="117.4" y="106.6" width="11" height=".8" fill="#b0b0b0"/></svg></div><svg style="left:0;top:0" width="40" height="158" viewBox="0 0 40 158"><g fill="#3db60c"><rect x="11.8" y="125" width="4.2" height="13"/><rect x="17.7" y="128.8" width="4.1" height="9.2"/><rect x="23" y="122.9" width="4.1" height="15.1"/></g></svg><span class="nm">report 2</span><svg class="rate" style="left:0;top:0" width="100" height="158" viewBox="0 0 100 158"><g fill="#333"><polygon points="19.05,142.50 20.52,145.58 23.90,146.02 21.43,148.37 22.05,151.73 19.05,150.10 16.05,151.73 16.67,148.37 14.20,146.02 17.58,145.58"/><polygon points="32.95,142.50 34.42,145.58 37.80,146.02 35.33,148.37 35.95,151.73 32.95,150.10 29.95,151.73 30.57,148.37 28.10,146.02 31.48,145.58"/><polygon points="46.85,142.50 48.32,145.58 51.70,146.02 49.23,148.37 49.85,151.73 46.85,150.10 43.85,151.73 44.47,148.37 42.00,146.02 45.38,145.58"/><polygon points="60.75,142.50 62.22,145.58 65.60,146.02 63.13,148.37 63.75,151.73 60.75,150.10 57.75,151.73 58.37,148.37 55.90,146.02 59.28,145.58"/><polygon points="74.65,142.50 76.12,145.58 79.50,146.02 77.03,148.37 77.65,151.73 74.65,150.10 71.65,151.73 72.27,148.37 69.80,146.02 73.18,145.58"/></g></svg><svg class="act" style="left:0;top:0" width="210" height="158" viewBox="0 0 210 158"><g fill="#efefef"><rect x="149" y="130" width="3.2" height="3.2"/><rect x="149" y="136" width="3.2" height="3.2"/><rect x="149" y="142" width="3.2" height="3.2"/></g><path d="M186.4,132.6 V130 Q186.4,129.4 187,129.4 H196 Q196.6,129.4 196.6,130 V143 Q196.6,143.6 196,143.6 H187 Q186.4,143.6 186.4,143 V140.4" fill="none" stroke="#d0d0d0" stroke-width="1.1"/><rect x="190.8" y="131.4" width="4.2" height="10.4" fill="#bdbdbd"/><path d="M181.4,136.5 H188.4 M185,132.8 L181.3,136.5 L185,140.2" fill="none" stroke="#4ba3d4" stroke-width="1.2"/></svg></div>
<div class="card" style="left:745px;top:272px"><div class="th w"><svg style="left:0;top:0" width="206" height="116" viewBox="0 0 206 116"><rect x="1.4" y="1.8" width="48" height=".9" fill="#cfcfcf"/><rect x="1.4" y="5.8" width="19" height="1" fill="#666"/><rect x="32" y="5.8" width="5" height="1" fill="#666"/><rect x="43.5" y="5.8" width="9" height="1" fill="#666"/><rect x="57" y="5.8" width="14" height="1" fill="#666"/><rect x="1.6" y="9.30" width="7" height="1.3" fill="#7c7c7c"/><rect x="33.2" y="9.30" width="6" height="1.3" fill="#7c7c7c"/><rect x="46.1" y="9.30" width="7" height="1.3" fill="#7c7c7c"/><rect x="63.4" y="9.30" width="8" height="1.3" fill="#7c7c7c"/><rect x="1.1" y="11.91" width="24.6" height="3.4" fill="#ececec"/><rect x="27.0" y="11.91" width="12.8" height="3.4" fill="#ececec"/><rect x="41.2" y="11.91" width="12.5" height="3.4" fill="#ececec"/><rect x="55.1" y="11.91" width="16.9" height="3.4" fill="#ececec"/><rect x="1.6" y="13.01" width="13" height="1.3" fill="#7c7c7c"/><rect x="34.2" y="13.01" width="5" height="1.3" fill="#7c7c7c"/><rect x="48.1" y="13.01" width="5" height="1.3" fill="#7c7c7c"/><rect x="63.4" y="13.01" width="8" height="1.3" fill="#7c7c7c"/><rect x="1.6" y="16.72" width="8" height="1.3" fill="#7c7c7c"/><rect x="33.2" y="16.72" width="6" height="1.3" fill="#7c7c7c"/><rect x="47.1" y="16.72" width="6" height="1.3" fill="#7c7c7c"/><rect x="63.4" y="16.72" width="8" height="1.3" fill="#7c7c7c"/><rect x="1.1" y="19.33" width="24.6" height="3.4" fill="#ececec"/><rect x="27.0" y="19.33" width="12.8" height="3.4" fill="#ececec"/><rect x="41.2" y="19.33" width="12.5" height="3.4" fill="#ececec"/><rect x="55.1" y="19.33" width="16.9" height="3.4" fill="#ececec"/><rect x="1.6" y="20.43" width="12" height="1.3" fill="#7c7c7c"/><rect x="31.2" y="20.43" width="8" height="1.3" fill="#7c7c7c"/><rect x="45.1" y="20.43" width="8" height="1.3" fill="#7c7c7c"/><rect x="65.4" y="20.43" width="6" height="1.3" fill="#7c7c7c"/><rect x="1.6" y="24.14" width="7" height="1.3" fill="#7c7c7c"/><rect x="33.2" y="24.14" width="6" height="1.3" fill="#7c7c7c"/><rect x="45.1" y="24.14" width="8" height="1.3" fill="#7c7c7c"/><rect x="66.4" y="24.14" width="5" height="1.3" fill="#7c7c7c"/><rect x="1.1" y="26.75" width="24.6" height="3.4" fill="#ececec"/><rect x="27.0" y="26.75" width="12.8" height="3.4" fill="#ececec"/><rect x="41.2" y="26.75" width="12.5" height="3.4" fill="#ececec"/><rect x="55.1" y="26.75" width="16.9" height="3.4" fill="#ececec"/><rect x="1.6" y="27.85" width="5" height="1.3" fill="#7c7c7c"/><rect x="33.2" y="27.85" width="6" height="1.3" fill="#7c7c7c"/><rect x="48.1" y="27.85" width="5" height="1.3" fill="#7c7c7c"/><rect x="64.4" y="27.85" width="7" height="1.3" fill="#7c7c7c"/><rect x="1.6" y="31.56" width="4" height="1.3" fill="#7c7c7c"/><rect x="32.2" y="31.56" width="7" height="1.3" fill="#7c7c7c"/><rect x="45.1" y="31.56" width="8" height="1.3" fill="#7c7c7c"/><rect x="63.4" y="31.56" width="8" height="1.3" fill="#7c7c7c"/><rect x="1.1" y="34.17" width="24.6" height="3.4" fill="#ececec"/><rect x="27.0" y="34.17" width="12.8" height="3.4" fill="#ececec"/><rect x="41.2" y="34.17" width="12.5" height="3.4" fill="#ececec"/><rect x="55.1" y="34.17" width="16.9" height="3.4" fill="#ececec"/><rect x="1.6" y="35.27" width="10" height="1.3" fill="#7c7c7c"/><rect x="31.2" y="35.27" width="8" height="1.3" fill="#7c7c7c"/><rect x="45.1" y="35.27" width="8" height="1.3" fill="#7c7c7c"/><rect x="65.4" y="35.27" width="6" height="1.3" fill="#7c7c7c"/><rect x="1.6" y="38.98" width="9" height="1.3" fill="#7c7c7c"/><rect x="34.2" y="38.98" width="5" height="1.3" fill="#7c7c7c"/><rect x="48.1" y="38.98" width="5" height="1.3" fill="#7c7c7c"/><rect x="65.4" y="38.98" width="6" height="1.3" fill="#7c7c7c"/><rect x="1.1" y="41.59" width="24.6" height="3.4" fill="#ececec"/><rect x="27.0" y="41.59" width="12.8" height="3.4" fill="#ececec"/><rect x="41.2" y="41.59" width="12.5" height="3.4" fill="#ececec"/><rect x="55.1" y="41.59" width="16.9" height="3.4" fill="#ececec"/><rect x="1.6" y="42.69" width="11" height="1.3" fill="#7c7c7c"/><rect x="33.2" y="42.69" width="6" height="1.3" fill="#7c7c7c"/><rect x="46.1" y="42.69" width="7" height="1.3" fill="#7c7c7c"/><rect x="63.4" y="42.69" width="8" height="1.3" fill="#7c7c7c"/><rect x="1.6" y="46.40" width="8" height="1.3" fill="#7c7c7c"/><rect x="31.2" y="46.40" width="8" height="1.3" fill="#7c7c7c"/><rect x="45.1" y="46.40" width="8" height="1.3" fill="#7c7c7c"/><rect x="64.4" y="46.40" width="7" height="1.3" fill="#7c7c7c"/><rect x="1.1" y="49.01" width="24.6" height="3.4" fill="#ececec"/><rect x="27.0" y="49.01" width="12.8" height="3.4" fill="#ececec"/><rect x="41.2" y="49.01" width="12.5" height="3.4" fill="#ececec"/><rect x="55.1" y="49.01" width="16.9" height="3.4" fill="#ececec"/><rect x="1.6" y="50.11" width="12" height="1.3" fill="#7c7c7c"/><rect x="31.2" y="50.11" width="8" height="1.3" fill="#7c7c7c"/><rect x="47.1" y="50.11" width="6" height="1.3" fill="#7c7c7c"/><rect x="64.4" y="50.11" width="7" height="1.3" fill="#7c7c7c"/><rect x="1.6" y="53.82" width="4" height="1.3" fill="#7c7c7c"/><rect x="32.2" y="53.82" width="7" height="1.3" fill="#7c7c7c"/><rect x="47.1" y="53.82" width="6" height="1.3" fill="#7c7c7c"/><rect x="64.4" y="53.82" width="7" height="1.3" fill="#7c7c7c"/><rect x="1.1" y="56.43" width="24.6" height="3.4" fill="#ececec"/><rect x="27.0" y="56.43" width="12.8" height="3.4" fill="#ececec"/><rect x="41.2" y="56.43" width="12.5" height="3.4" fill="#ececec"/><rect x="55.1" y="56.43" width="16.9" height="3.4" fill="#ececec"/><rect x="1.6" y="57.53" width="12" height="1.3" fill="#7c7c7c"/><rect x="34.2" y="57.53" width="5" height="1.3" fill="#7c7c7c"/><rect x="47.1" y="57.53" width="6" height="1.3" fill="#7c7c7c"/><rect x="64.4" y="57.53" width="7" height="1.3" fill="#7c7c7c"/><rect x="1.6" y="61.24" width="8" height="1.3" fill="#7c7c7c"/><rect x="34.2" y="61.24" width="5" height="1.3" fill="#7c7c7c"/><rect x="48.1" y="61.24" width="5" height="1.3" fill="#7c7c7c"/><rect x="63.4" y="61.24" width="8" height="1.3" fill="#7c7c7c"/><rect x="1.1" y="63.85" width="24.6" height="3.4" fill="#ececec"/><rect x="27.0" y="63.85" width="12.8" height="3.4" fill="#ececec"/><rect x="41.2" y="63.85" width="12.5" height="3.4" fill="#ececec"/><rect x="55.1" y="63.85" width="16.9" height="3.4" fill="#ececec"/><rect x="1.6" y="64.95" width="11" height="1.3" fill="#7c7c7c"/><rect x="34.2" y="64.95" width="5" height="1.3" fill="#7c7c7c"/><rect x="46.1" y="64.95" width="7" height="1.3" fill="#7c7c7c"/><rect x="66.4" y="64.95" width="5" height="1.3" fill="#7c7c7c"/><rect x="1.6" y="68.66" width="10" height="1.3" fill="#7c7c7c"/><rect x="33.2" y="68.66" width="6" height="1.3" fill="#7c7c7c"/><rect x="48.1" y="68.66" width="5" height="1.3" fill="#7c7c7c"/><rect x="64.4" y="68.66" width="7" height="1.3" fill="#7c7c7c"/><rect x="1.1" y="71.27" width="24.6" height="3.4" fill="#ececec"/><rect x="27.0" y="71.27" width="12.8" height="3.4" fill="#ececec"/><rect x="41.2" y="71.27" width="12.5" height="3.4" fill="#ececec"/><rect x="55.1" y="71.27" width="16.9" height="3.4" fill="#ececec"/><rect x="1.6" y="72.37" width="10" height="1.3" fill="#7c7c7c"/><rect x="31.2" y="72.37" width="8" height="1.3" fill="#7c7c7c"/><rect x="48.1" y="72.37" width="5" height="1.3" fill="#7c7c7c"/><rect x="66.4" y="72.37" width="5" height="1.3" fill="#7c7c7c"/><rect x="1.6" y="76.08" width="13" height="1.3" fill="#7c7c7c"/><rect x="34.2" y="76.08" width="5" height="1.3" fill="#7c7c7c"/><rect x="45.1" y="76.08" width="8" height="1.3" fill="#7c7c7c"/><rect x="64.4" y="76.08" width="7" height="1.3" fill="#7c7c7c"/><rect x="1.1" y="78.69" width="24.6" height="3.4" fill="#ececec"/><rect x="27.0" y="78.69" width="12.8" height="3.4" fill="#ececec"/><rect x="41.2" y="78.69" width="12.5" height="3.4" fill="#ececec"/><rect x="55.1" y="78.69" width="16.9" height="3.4" fill="#ececec"/><rect x="1.6" y="79.79" width="12" height="1.3" fill="#7c7c7c"/><rect x="32.2" y="79.79" width="7" height="1.3" fill="#7c7c7c"/><rect x="47.1" y="79.79" width="6" height="1.3" fill="#7c7c7c"/><rect x="66.4" y="79.79" width="5" height="1.3" fill="#7c7c7c"/><rect x="1.6" y="83.50" width="8" height="1.3" fill="#7c7c7c"/><rect x="34.2" y="83.50" width="5" height="1.3" fill="#7c7c7c"/><rect x="48.1" y="83.50" width="5" height="1.3" fill="#7c7c7c"/><rect x="66.4" y="83.50" width="5" height="1.3" fill="#7c7c7c"/><rect x="1.1" y="86.11" width="24.6" height="3.4" fill="#ececec"/><rect x="27.0" y="86.11" width="12.8" height="3.4" fill="#ececec"/><rect x="41.2" y="86.11" width="12.5" height="3.4" fill="#ececec"/><rect x="55.1" y="86.11" width="16.9" height="3.4" fill="#ececec"/><rect x="1.6" y="87.21" width="13" height="1.3" fill="#7c7c7c"/><rect x="34.2" y="87.21" width="5" height="1.3" fill="#7c7c7c"/><rect x="47.1" y="87.21" width="6" height="1.3" fill="#7c7c7c"/><rect x="63.4" y="87.21" width="8" height="1.3" fill="#7c7c7c"/><rect x="1.6" y="90.92" width="8" height="1.3" fill="#7c7c7c"/><rect x="32.2" y="90.92" width="7" height="1.3" fill="#7c7c7c"/><rect x="47.1" y="90.92" width="6" height="1.3" fill="#7c7c7c"/><rect x="66.4" y="90.92" width="5" height="1.3" fill="#7c7c7c"/><rect x="1.1" y="93.53" width="24.6" height="3.4" fill="#ececec"/><rect x="27.0" y="93.53" width="12.8" height="3.4" fill="#ececec"/><rect x="41.2" y="93.53" width="12.5" height="3.4" fill="#ececec"/><rect x="55.1" y="93.53" width="16.9" height="3.4" fill="#ececec"/><rect x="1.6" y="94.63" width="9" height="1.3" fill="#7c7c7c"/><rect x="32.2" y="94.63" width="7" height="1.3" fill="#7c7c7c"/><rect x="46.1" y="94.63" width="7" height="1.3" fill="#7c7c7c"/><rect x="65.4" y="94.63" width="6" height="1.3" fill="#7c7c7c"/><rect x="1.6" y="98.34" width="10" height="1.3" fill="#7c7c7c"/><rect x="31.2" y="98.34" width="8" height="1.3" fill="#7c7c7c"/><rect x="45.1" y="98.34" width="8" height="1.3" fill="#7c7c7c"/><rect x="63.4" y="98.34" width="8" height="1.3" fill="#7c7c7c"/><rect x="1.1" y="100.95" width="24.6" height="3.4" fill="#cff3f3"/><rect x="27.0" y="100.95" width="12.8" height="3.4" fill="#cff3f3"/><rect x="41.2" y="100.95" width="12.5" height="3.4" fill="#cff3f3"/><rect x="55.1" y="100.95" width="16.9" height="3.4" fill="#cff3f3"/><rect x="1.6" y="102.05" width="13" height="1.3" fill="#3a6a6a"/><rect x="34.2" y="102.05" width="5" height="1.3" fill="#3a6a6a"/><rect x="46.1" y="102.05" width="7" height="1.3" fill="#3a6a6a"/><rect x="63.4" y="102.05" width="8" height="1.3" fill="#3a6a6a"/></svg></div><svg style="left:0;top:0" width="40" height="158" viewBox="0 0 40 158"><g fill="#3db60c"><rect x="11.8" y="125" width="4.2" height="13"/><rect x="17.7" y="128.8" width="4.1" height="9.2"/><rect x="23" y="122.9" width="4.1" height="15.1"/></g></svg><span class="nm">report 3</span><svg class="rate" style="left:0;top:0" width="100" height="158" viewBox="0 0 100 158"><g fill="#333"><polygon points="19.05,142.50 20.52,145.58 23.90,146.02 21.43,148.37 22.05,151.73 19.05,150.10 16.05,151.73 16.67,148.37 14.20,146.02 17.58,145.58"/><polygon points="32.95,142.50 34.42,145.58 37.80,146.02 35.33,148.37 35.95,151.73 32.95,150.10 29.95,151.73 30.57,148.37 28.10,146.02 31.48,145.58"/><polygon points="46.85,142.50 48.32,145.58 51.70,146.02 49.23,148.37 49.85,151.73 46.85,150.10 43.85,151.73 44.47,148.37 42.00,146.02 45.38,145.58"/><polygon points="60.75,142.50 62.22,145.58 65.60,146.02 63.13,148.37 63.75,151.73 60.75,150.10 57.75,151.73 58.37,148.37 55.90,146.02 59.28,145.58"/><polygon points="74.65,142.50 76.12,145.58 79.50,146.02 77.03,148.37 77.65,151.73 74.65,150.10 71.65,151.73 72.27,148.37 69.80,146.02 73.18,145.58"/></g></svg><svg class="act" style="left:0;top:0" width="210" height="158" viewBox="0 0 210 158"><g fill="#efefef"><rect x="149" y="130" width="3.2" height="3.2"/><rect x="149" y="136" width="3.2" height="3.2"/><rect x="149" y="142" width="3.2" height="3.2"/></g><path d="M186.4,132.6 V130 Q186.4,129.4 187,129.4 H196 Q196.6,129.4 196.6,130 V143 Q196.6,143.6 196,143.6 H187 Q186.4,143.6 186.4,143 V140.4" fill="none" stroke="#d0d0d0" stroke-width="1.1"/><rect x="190.8" y="131.4" width="4.2" height="10.4" fill="#bdbdbd"/><path d="M181.4,136.5 H188.4 M185,132.8 L181.3,136.5 L185,140.2" fill="none" stroke="#4ba3d4" stroke-width="1.2"/></svg></div>
<div class="card" style="left:964px;top:272px"><div class="th w"><svg style="left:0;top:0" width="206" height="116" viewBox="0 0 206 116"><rect x="1.2" y="1.8" width="40" height=".9" fill="#c4c4c4"/><rect x=".9" y="4.3" width="31.1" height="3.71" fill="#d42a58"/><rect x="32" y="4.3" width="24.9" height="3.71" fill="#2a96dc"/><rect x="1.6" y="5.7" width="19" height=".9" fill="#f4c6d2"/><rect x="33.4" y="5.7" width="9" height=".9" fill="#1a5f96"/><rect x="44.4" y="5.7" width="11" height=".9" fill="#1a5f96"/><rect x=".9" y="8.01" width="31.1" height="3.71" fill="#d6305c"/><rect x="1.4" y="9.41" width="4" height=".9" fill="#7a1430"/><rect x="32" y="8.01" width="24.9" height="3.71" fill="#fff" stroke="#e2e2e2" stroke-width=".3"/><rect x="35.4" y="9.21" width="7" height="1.3" fill="#8c8c8c"/><rect x=".9" y="11.72" width="31.1" height="3.71" fill="#d6305c"/><rect x="1.4" y="13.12" width="4" height=".9" fill="#7a1430"/><rect x="32" y="11.72" width="24.9" height="3.71" fill="#fff" stroke="#e2e2e2" stroke-width=".3"/><rect x="35.4" y="12.92" width="7" height="1.3" fill="#8c8c8c"/><rect x=".9" y="15.43" width="31.1" height="3.71" fill="#dc4a72"/><rect x="3.4" y="16.83" width="8" height=".9" fill="#7a1430"/><rect x="32" y="15.43" width="24.9" height="3.71" fill="#fff" stroke="#e2e2e2" stroke-width=".3"/><rect x="35.4" y="16.63" width="7" height="1.3" fill="#8c8c8c"/><rect x="50" y="16.63" width="6" height="1.3" fill="#8c8c8c"/><rect x=".9" y="19.14" width="31.1" height="3.71" fill="#e06484"/><rect x="6.4" y="20.54" width="8" height=".9" fill="#7a1430"/><rect x="32" y="19.14" width="24.9" height="3.71" fill="#fff" stroke="#e2e2e2" stroke-width=".3"/><rect x="35.4" y="20.34" width="7" height="1.3" fill="#8c8c8c"/><rect x="50" y="20.34" width="6" height="1.3" fill="#8c8c8c"/><rect x=".9" y="22.85" width="31.1" height="3.71" fill="#e06484"/><rect x="6.4" y="24.25" width="8" height=".9" fill="#7a1430"/><rect x="32" y="22.85" width="24.9" height="3.71" fill="#fff" stroke="#e2e2e2" stroke-width=".3"/><rect x="35.4" y="24.05" width="7" height="1.3" fill="#8c8c8c"/><rect x="50" y="24.05" width="6" height="1.3" fill="#8c8c8c"/><rect x=".9" y="26.56" width="31.1" height="3.71" fill="#e06484"/><rect x="6.4" y="27.96" width="8" height=".9" fill="#7a1430"/><rect x="32" y="26.56" width="24.9" height="3.71" fill="#fff" stroke="#e2e2e2" stroke-width=".3"/><rect x="35.4" y="27.76" width="7" height="1.3" fill="#8c8c8c"/><rect x="50" y="27.76" width="6" height="1.3" fill="#8c8c8c"/><rect x=".9" y="30.27" width="31.1" height="3.71" fill="#dc4a72"/><rect x="3.4" y="31.67" width="8" height=".9" fill="#7a1430"/><rect x="32" y="30.27" width="24.9" height="3.71" fill="#fff" stroke="#e2e2e2" stroke-width=".3"/><rect x="35.4" y="31.47" width="7" height="1.3" fill="#8c8c8c"/><rect x="50" y="31.47" width="6" height="1.3" fill="#8c8c8c"/><rect x=".9" y="33.98" width="31.1" height="3.71" fill="#dc4a72"/><rect x="3.4" y="35.38" width="8" height=".9" fill="#7a1430"/><rect x="32" y="33.98" width="24.9" height="3.71" fill="#fff" stroke="#e2e2e2" stroke-width=".3"/><rect x="35.4" y="35.18" width="7" height="1.3" fill="#8c8c8c"/><rect x="50" y="35.18" width="6" height="1.3" fill="#8c8c8c"/><rect x=".9" y="37.69" width="31.1" height="3.71" fill="#dc4a72"/><rect x="3.4" y="39.09" width="8" height=".9" fill="#7a1430"/><rect x="32" y="37.69" width="24.9" height="3.71" fill="#fff" stroke="#e2e2e2" stroke-width=".3"/><rect x="35.4" y="38.89" width="7" height="1.3" fill="#8c8c8c"/><rect x="50" y="38.89" width="6" height="1.3" fill="#8c8c8c"/><rect x=".9" y="41.40" width="31.1" height="3.71" fill="#d42a58"/><rect x="1.4" y="42.80" width="4" height=".9" fill="#7a1430"/><rect x="32" y="41.40" width="24.9" height="3.71" fill="#fff" stroke="#e2e2e2" stroke-width=".3"/><rect x="35.4" y="42.60" width="7" height="1.3" fill="#8c8c8c"/><rect x="42.8" y="8" width=".3" height="37.1" fill="#e2e2e2"/></svg></div><svg style="left:0;top:0" width="40" height="158" viewBox="0 0 40 158"><g fill="#3db60c"><rect x="11.8" y="125" width="4.2" height="13"/><rect x="17.7" y="128.8" width="4.1" height="9.2"/><rect x="23" y="122.9" width="4.1" height="15.1"/></g></svg><span class="nm">report 4</span><svg class="rate" style="left:0;top:0" width="100" height="158" viewBox="0 0 100 158"><g fill="#333"><polygon points="19.05,142.50 20.52,145.58 23.90,146.02 21.43,148.37 22.05,151.73 19.05,150.10 16.05,151.73 16.67,148.37 14.20,146.02 17.58,145.58"/><polygon points="32.95,142.50 34.42,145.58 37.80,146.02 35.33,148.37 35.95,151.73 32.95,150.10 29.95,151.73 30.57,148.37 28.10,146.02 31.48,145.58"/><polygon points="46.85,142.50 48.32,145.58 51.70,146.02 49.23,148.37 49.85,151.73 46.85,150.10 43.85,151.73 44.47,148.37 42.00,146.02 45.38,145.58"/><polygon points="60.75,142.50 62.22,145.58 65.60,146.02 63.13,148.37 63.75,151.73 60.75,150.10 57.75,151.73 58.37,148.37 55.90,146.02 59.28,145.58"/><polygon points="74.65,142.50 76.12,145.58 79.50,146.02 77.03,148.37 77.65,151.73 74.65,150.10 71.65,151.73 72.27,148.37 69.80,146.02 73.18,145.58"/></g></svg><svg class="act" style="left:0;top:0" width="210" height="158" viewBox="0 0 210 158"><g fill="#efefef"><rect x="149" y="130" width="3.2" height="3.2"/><rect x="149" y="136" width="3.2" height="3.2"/><rect x="149" y="142" width="3.2" height="3.2"/></g><path d="M186.4,132.6 V130 Q186.4,129.4 187,129.4 H196 Q196.6,129.4 196.6,130 V143 Q196.6,143.6 196,143.6 H187 Q186.4,143.6 186.4,143 V140.4" fill="none" stroke="#d0d0d0" stroke-width="1.1"/><rect x="190.8" y="131.4" width="4.2" height="10.4" fill="#bdbdbd"/><path d="M181.4,136.5 H188.4 M185,132.8 L181.3,136.5 L185,140.2" fill="none" stroke="#4ba3d4" stroke-width="1.2"/></svg></div>
<div class="card" style="left:307px;top:439px"><div class="th w"><svg style="left:0;top:0" width="206" height="116" viewBox="0 0 206 116"><rect x="1.4" y="1.6" width="31" height=".9" fill="#c0c0c0"/><rect x="1.4" y="5.2" width="5" height=".7" fill="#cacaca"/><rect x="103.6" y="5.2" width="4" height=".7" fill="#cacaca"/><line x1="24.6" y1="47.6" x2="89.2" y2="77.7" stroke="#fbe6c2" stroke-width=".35"/><line x1="118.4" y1="45" x2="194.6" y2="85.2" stroke="#f8d4dc" stroke-width=".35"/><rect x="13.2" y="36" width="1.5" height="30" fill="#d0508c" opacity=".55"/><rect x="13.1" y="43" width="1.9" height="16" fill="#b04aa8" opacity=".55"/><rect x="13.6" y="49.7" width="1.1" height="1.1" fill="#f5a623" opacity=".75"/><rect x="13.7" y="56.6" width="1.1" height="1.1" fill="#f5a623" opacity=".75"/><rect x="13.5" y="49.9" width="1.1" height="1.1" fill="#f5a623" opacity=".75"/><rect x="13.2" y="54.3" width="1.1" height="1.1" fill="#f5a623" opacity=".75"/><rect x="13.4" y="55.6" width="1.1" height="1.1" fill="#e8456f" opacity=".75"/><rect x="13.2" y="53.7" width="1.1" height="1.1" fill="#e8456f" opacity=".75"/><rect x="13.1" y="43.9" width="1.1" height="1.1" fill="#e8456f" opacity=".75"/><rect x="13.4" y="43.3" width="1.1" height="1.1" fill="#e8456f" opacity=".75"/><rect x="13.3" y="69.0" width="1.1" height="1.1" fill="#e8456f" opacity=".75"/><rect x="13.5" y="57.1" width="1.1" height="1.1" fill="#e8456f" opacity=".75"/><rect x="13.2" y="46.0" width="1.1" height="1.1" fill="#e8456f" opacity=".75"/><rect x="13.5" y="67.5" width="1.1" height="1.1" fill="#e8456f" opacity=".75"/><rect x="13.1" y="44.1" width="1.1" height="1.1" fill="#f5a623" opacity=".75"/><rect x="13.5" y="60.1" width="1.1" height="1.1" fill="#f5a623" opacity=".75"/><rect x="13.3" y="48.0" width="1.1" height="1.1" fill="#e8456f" opacity=".75"/><rect x="13.7" y="43.4" width="1.1" height="1.1" fill="#b566d6" opacity=".75"/><rect x="13.6" y="47.1" width="1.1" height="1.1" fill="#e8456f" opacity=".75"/><rect x="13.2" y="67.2" width="1.1" height="1.1" fill="#b566d6" opacity=".75"/><rect x="13.6" y="33.9" width="1.1" height="1.1" fill="#b566d6" opacity=".75"/><rect x="13.5" y="49.1" width="1.1" height="1.1" fill="#f5a623" opacity=".75"/><rect x="13.6" y="58.9" width="1.1" height="1.1" fill="#e8456f" opacity=".75"/><rect x="13.8" y="58.3" width="1.1" height="1.1" fill="#f5a623" opacity=".75"/><rect x="13.6" y="65.0" width="1.1" height="1.1" fill="#e8456f" opacity=".75"/><rect x="13.7" y="55.3" width="1.1" height="1.1" fill="#b566d6" opacity=".75"/><rect x="13.4" y="47.5" width="1.1" height="1.1" fill="#f5a623" opacity=".75"/><rect x="13.1" y="59.1" width="1.1" height="1.1" fill="#f5a623" opacity=".75"/><rect x="13.6" y="61.6" width="1.1" height="1.1" fill="#f5a623" opacity=".75"/><rect x="13.6" y="48.5" width="1.1" height="1.1" fill="#b566d6" opacity=".75"/><rect x="13.7" y="34.9" width="1.1" height="1.1" fill="#b566d6" opacity=".75"/><rect x="13.6" y="29.3" width="1.1" height="1.1" fill="#b566d6" opacity=".75"/><rect x="13.2" y="61.9" width="1.1" height="1.1" fill="#f5a623" opacity=".75"/><rect x="13.4" y="53.4" width="1.1" height="1.1" fill="#e8456f" opacity=".75"/><rect x="13.3" y="52.5" width="1.1" height="1.1" fill="#f5a623" opacity=".75"/><rect x="13.7" y="47.3" width="1.1" height="1.1" fill="#f5a623" opacity=".75"/><rect x="13.5" y="60.6" width="1.1" height="1.1" fill="#e8456f" opacity=".75"/><rect x="13.7" y="56.8" width="1.1" height="1.1" fill="#e8456f" opacity=".75"/><rect x="13.4" y="50.3" width="1.1" height="1.1" fill="#f5a623" opacity=".75"/><rect x="13.8" y="61.2" width="1.1" height="1.1" fill="#e8456f" opacity=".75"/><rect x="13.6" y="56.5" width="1.1" height="1.1" fill="#f5a623" opacity=".75"/><rect x="13.4" y="54.6" width="1.1" height="1.1" fill="#e8456f" opacity=".75"/><rect x="13.2" y="55.0" width="1.1" height="1.1" fill="#e8456f" opacity=".75"/><rect x="13.4" y="58.7" width="1.1" height="1.1" fill="#e8456f" opacity=".75"/><rect x="13.7" y="50.1" width="1.1" height="1.1" fill="#e8456f" opacity=".75"/><rect x="13.6" y="56.2" width="1.1" height="1.1" fill="#f5a623" opacity=".75"/><rect x="13.8" y="34.5" width="1.1" height="1.1" fill="#e8456f" opacity=".75"/><rect x="13.4" y="56.9" width="1.1" height="1.1" fill="#f5a623" opacity=".75"/><rect x="13.4" y="43.9" width="1.1" height="1.1" fill="#e8456f" opacity=".75"/><rect x="13.1" y="58.4" width="1.1" height="1.1" fill="#e8456f" opacity=".75"/><rect x="13.5" y="48.0" width="1.1" height="1.1" fill="#f5a623" opacity=".75"/><rect x="13.1" y="53.6" width="1.1" height="1.1" fill="#e8456f" opacity=".75"/><rect x="13.5" y="30.6" width="1.1" height="1.1" fill="#f5a623" opacity=".75"/><rect x="13.7" y="47.0" width="1.1" height="1.1" fill="#e8456f" opacity=".75"/><rect x="13.8" y="42.9" width="1.1" height="1.1" fill="#e8456f" opacity=".75"/><rect x="13.4" y="61.0" width="1.1" height="1.1" fill="#f5a623" opacity=".75"/><rect x="13.8" y="59.8" width="1.1" height="1.1" fill="#f5a623" opacity=".75"/><rect x="13.4" y="58.9" width="1.1" height="1.1" fill="#f5a623" opacity=".75"/><rect x="13.6" y="61.2" width="1.1" height="1.1" fill="#f5a623" opacity=".75"/><rect x="13.7" y="63.8" width="1.1" height="1.1" fill="#e8456f" opacity=".75"/><rect x="13.8" y="45.9" width="1.1" height="1.1" fill="#b566d6" opacity=".75"/><rect x="13.2" y="51.4" width="1.1" height="1.1" fill="#e8456f" opacity=".75"/><rect x="13.3" y="65.0" width="1.1" height="1.1" fill="#f5a623" opacity=".75"/><rect x="13.6" y="44.2" width="1.1" height="1.1" fill="#b566d6" opacity=".75"/><rect x="13.3" y="32.5" width="1.1" height="1.1" fill="#e8456f" opacity=".75"/><rect x="13.5" y="49.7" width="1.1" height="1.1" fill="#e8456f" opacity=".75"/><rect x="13.7" y="48.9" width="1.1" height="1.1" fill="#e8456f" opacity=".75"/><rect x="13.7" y="57.6" width="1.1" height="1.1" fill="#f5a623" opacity=".75"/><rect x="13.5" y="51.6" width="1.1" height="1.1" fill="#b566d6" opacity=".75"/><rect x="13.6" y="45.6" width="1.1" height="1.1" fill="#f5a623" opacity=".75"/><rect x="13.2" y="54.5" width="1.1" height="1.1" fill="#e8456f" opacity=".75"/><rect x="13.8" y="42.1" width="1.1" height="1.1" fill="#f5a623" opacity=".75"/><rect x="13.4" y="18.0" width="1.3" height="1.3" fill="#b566d6" opacity=".8"/><rect x="13.4" y="27.0" width="1.3" height="1.3" fill="#e8456f" opacity=".8"/><rect x="13.4" y="31.0" width="1.3" height="1.3" fill="#f5a623" opacity=".8"/><rect x="13.4" y="73.0" width="1.3" height="1.3" fill="#f5a623" opacity=".8"/><rect x="13.4" y="78.0" width="1.3" height="1.3" fill="#e8456f" opacity=".8"/><rect x="13.4" y="85.5" width="1.3" height="1.3" fill="#b566d6" opacity=".8"/><rect x="13.4" y="99.0" width="1.3" height="1.3" fill="#f5a623" opacity=".8"/><rect x="13.4" y="101.0" width="1.3" height="1.3" fill="#f5a623" opacity=".8"/><rect x="114.5" y="36" width="1.5" height="30" fill="#d0508c" opacity=".55"/><rect x="114.3" y="43" width="1.9" height="16" fill="#b04aa8" opacity=".55"/><rect x="114.6" y="57.2" width="1.1" height="1.1" fill="#b566d6" opacity=".75"/><rect x="114.5" y="38.5" width="1.1" height="1.1" fill="#f5a623" opacity=".75"/><rect x="114.5" y="52.9" width="1.1" height="1.1" fill="#e8456f" opacity=".75"/><rect x="115.1" y="57.9" width="1.1" height="1.1" fill="#e8456f" opacity=".75"/><rect x="114.9" y="57.5" width="1.1" height="1.1" fill="#f5a623" opacity=".75"/><rect x="115.0" y="43.3" width="1.1" height="1.1" fill="#f5a623" opacity=".75"/><rect x="114.9" y="65.3" width="1.1" height="1.1" fill="#f5a623" opacity=".75"/><rect x="115.0" y="43.6" width="1.1" height="1.1" fill="#f5a623" opacity=".75"/><rect x="115.0" y="54.0" width="1.1" height="1.1" fill="#f5a623" opacity=".75"/><rect x="114.7" y="44.2" width="1.1" height="1.1" fill="#f5a623" opacity=".75"/><rect x="114.5" y="51.1" width="1.1" height="1.1" fill="#e8456f" opacity=".75"/><rect x="114.8" y="46.6" width="1.1" height="1.1" fill="#f5a623" opacity=".75"/><rect x="115.0" y="53.8" width="1.1" height="1.1" fill="#f5a623" opacity=".75"/><rect x="114.9" y="47.3" width="1.1" height="1.1" fill="#b566d6" opacity=".75"/><rect x="114.4" y="58.3" width="1.1" height="1.1" fill="#f5a623" opacity=".75"/><rect x="114.8" y="61.4" width="1.1" height="1.1" fill="#e8456f" opacity=".75"/><rect x="115.0" y="35.3" width="1.1" height="1.1" fill="#e8456f" opacity=".75"/><rect x="114.4" y="59.4" width="1.1" height="1.1" fill="#e8456f" opacity=".75"/><rect x="114.8" y="50.2" width="1.1" height="1.1" fill="#b566d6" opacity=".75"/><rect x="114.8" y="58.4" width="1.1" height="1.1" fill="#e8456f" opacity=".75"/><rect x="115.0" y="65.7" width="1.1" height="1.1" fill="#e8456f" opacity=".75"/><rect x="115.0" y="57.5" width="1.1" height="1.1" fill="#e8456f" opacity=".75"/><rect x="114.8" y="34.3" width="1.1" height="1.1" fill="#e8456f" opacity=".75"/><rect x="114.5" y="61.6" width="1.1" height="1.1" fill="#e8456f" opacity=".75"/><rect x="114.5" y="61.6" width="1.1" height="1.1" fill="#f5a623" opacity=".75"/><rect x="114.9" y="53.1" width="1.1" height="1.1" fill="#e8456f" opacity=".75"/><rect x="114.9" y="56.8" width="1.1" height="1.1" fill="#e8456f" opacity=".75"/><rect x="114.4" y="61.0" width="1.1" height="1.1" fill="#e8456f" opacity=".75"/><rect x="114.9" y="41.9" width="1.1" height="1.1" fill="#e8456f" opacity=".75"/><rect x="114.4" y="50.0" width="1.1" height="1.1" fill="#e8456f" opacity=".75"/><rect x="114.8" y="49.4" width="1.1" height="1.1" fill="#e8456f" opacity=".75"/><rect x="114.4" y="67.3" width="1.1" height="1.1" fill="#f5a623" opacity=".75"/><rect x="114.8" y="40.4" width="1.1" height="1.1" fill="#e8456f" opacity=".75"/><rect x="114.5" y="56.3" width="1.1" height="1.1" fill="#b566d6" opacity=".75"/><rect x="114.7" y="41.4" width="1.1" height="1.1" fill="#e8456f" opacity=".75"/><rect x="114.9" y="55.3" width="1.1" height="1.1" fill="#b566d6" opacity=".75"/><rect x="114.5" y="68.8" width="1.1" height="1.1" fill="#f5a623" opacity=".75"/><rect x="114.5" y="43.1" width="1.1" height="1.1" fill="#f5a623" opacity=".75"/><rect x="114.9" y="45.9" width="1.1" height="1.1" fill="#f5a623" opacity=".75"/><rect x="114.5" y="56.9" width="1.1" height="1.1" fill="#b566d6" opacity=".75"/><rect x="114.5" y="56.1" width="1.1" height="1.1" fill="#b566d6" opacity=".75"/><rect x="114.5" y="33.2" width="1.1" height="1.1" fill="#e8456f" opacity=".75"/><rect x="115.1" y="58.2" width="1.1" height="1.1" fill="#f5a623" opacity=".75"/><rect x="115.0" y="50.7" width="1.1" height="1.1" fill="#e8456f" opacity=".75"/><rect x="114.5" y="69.0" width="1.1" height="1.1" fill="#f5a623" opacity=".75"/><rect x="115.1" y="50.9" width="1.1" height="1.1" fill="#f5a623" opacity=".75"/><rect x="114.6" y="48.8" width="1.1" height="1.1" fill="#b566d6" opacity=".75"/><rect x="114.4" y="57.0" width="1.1" height="1.1" fill="#e8456f" opacity=".75"/><rect x="114.7" y="38.4" width="1.1" height="1.1" fill="#e8456f" opacity=".75"/><rect x="114.8" y="55.6" width="1.1" height="1.1" fill="#e8456f" opacity=".75"/><rect x="115.0" y="56.3" width="1.1" height="1.1" fill="#e8456f" opacity=".75"/><rect x="115.1" y="50.9" width="1.1" height="1.1" fill="#f5a623" opacity=".75"/><rect x="115.0" y="58.2" width="1.1" height="1.1" fill="#e8456f" opacity=".75"/><rect x="114.6" y="55.6" width="1.1" height="1.1" fill="#e8456f" opacity=".75"/><rect x="114.9" y="59.4" width="1.1" height="1.1" fill="#b566d6" opacity=".75"/><rect x="114.7" y="36.1" width="1.1" height="1.1" fill="#e8456f" opacity=".75"/><rect x="114.9" y="62.2" width="1.1" height="1.1" fill="#f5a623" opacity=".75"/><rect x="114.6" y="46.3" width="1.1" height="1.1" fill="#e8456f" opacity=".75"/><rect x="115.1" y="48.9" width="1.1" height="1.1" fill="#f5a623" opacity=".75"/><rect x="115.0" y="53.6" width="1.1" height="1.1" fill="#f5a623" opacity=".75"/><rect x="114.6" y="47.0" width="1.1" height="1.1" fill="#f5a623" opacity=".75"/><rect x="114.7" y="48.0" width="1.1" height="1.1" fill="#b566d6" opacity=".75"/><rect x="115.0" y="61.4" width="1.1" height="1.1" fill="#e8456f" opacity=".75"/><rect x="114.5" y="51.7" width="1.1" height="1.1" fill="#e8456f" opacity=".75"/><rect x="115.1" y="46.7" width="1.1" height="1.1" fill="#b566d6" opacity=".75"/><rect x="114.4" y="31.5" width="1.1" height="1.1" fill="#e8456f" opacity=".75"/><rect x="114.8" y="63.5" width="1.1" height="1.1" fill="#e8456f" opacity=".75"/><rect x="114.6" y="46.8" width="1.1" height="1.1" fill="#e8456f" opacity=".75"/><rect x="115.0" y="48.6" width="1.1" height="1.1" fill="#b566d6" opacity=".75"/><rect x="114.4" y="45.7" width="1.1" height="1.1" fill="#f5a623" opacity=".75"/><rect x="114.7" y="18.0" width="1.3" height="1.3" fill="#b566d6" opacity=".8"/><rect x="114.7" y="73.0" width="1.3" height="1.3" fill="#f5a623" opacity=".8"/><rect x="114.7" y="101.0" width="1.3" height="1.3" fill="#f5a623" opacity=".8"/><g fill="#72ad58" fill-opacity=".5"><circle cx="49.4" cy="54.4" r="2.5"/><circle cx="62.3" cy="49.9" r="3.4"/><circle cx="60.0" cy="55.6" r="3.0"/><circle cx="54.7" cy="58.3" r="3.0"/><circle cx="60.0" cy="60.9" r="3.0"/><circle cx="49.9" cy="62.7" r="3.0"/><circle cx="43.2" cy="62.1" r="2.3"/><circle cx="39.1" cy="60.6" r="1.8"/><circle cx="76.0" cy="57.7" r="4.4"/><circle cx="82.2" cy="57.0" r="4.2"/><circle cx="87.5" cy="59.1" r="4.8"/><circle cx="89.2" cy="61.8" r="5.0"/><circle cx="27.3" cy="63.6" r="1.4"/><circle cx="153.5" cy="53.8" r="3.2"/><circle cx="148.2" cy="56.5" r="2.7"/><circle cx="150.3" cy="57.9" r="2.7"/><circle cx="142.4" cy="59.7" r="2.1"/><circle cx="137.0" cy="62.1" r="2.1"/><circle cx="130.8" cy="60.4" r="1.6"/><circle cx="157.0" cy="62.1" r="3.7"/><circle cx="165.4" cy="53.5" r="3.5"/><circle cx="170.7" cy="58.3" r="3.9"/><circle cx="170.3" cy="61.4" r="4.4"/><circle cx="176.9" cy="53.8" r="4.8"/><circle cx="194.2" cy="59.1" r="5.8"/></g><g fill="#2b8fd6" fill-opacity=".6"><circle cx="40.0" cy="54.4" r="2.1"/><circle cx="48.5" cy="58.8" r="2.3"/><circle cx="37.4" cy="56.5" r="1.8"/><circle cx="27.8" cy="49.8" r="1.6"/><circle cx="142.4" cy="53.8" r="2.5"/><circle cx="133.5" cy="52.1" r="1.6"/><circle cx="128.2" cy="49.4" r="1.2"/><circle cx="122.0" cy="45.5" r="1.1"/><circle cx="137.9" cy="59.1" r="2.1"/><circle cx="17.9" cy="47.3" r="0.9"/><circle cx="23.9" cy="52.6" r="1.1"/><circle cx="16.1" cy="56.9" r="1.6"/><circle cx="19.0" cy="57.2" r="1.6"/><circle cx="19.7" cy="57.9" r="1.5"/><circle cx="29.4" cy="55.7" r="1.6"/><circle cx="22.6" cy="52.3" r="1.2"/><circle cx="23.6" cy="56.7" r="1.0"/><circle cx="32.5" cy="57.8" r="1.1"/><circle cx="25.8" cy="56.9" r="1.6"/><circle cx="30.0" cy="53.1" r="1.1"/><circle cx="24.8" cy="58.2" r="1.3"/><circle cx="27.8" cy="58.4" r="1.1"/><circle cx="38.5" cy="54.3" r="1.4"/><circle cx="25.1" cy="62.8" r="1.2"/><circle cx="24.5" cy="56.0" r="1.2"/><circle cx="18.4" cy="56.4" r="1.1"/><circle cx="24.1" cy="55.9" r="1.1"/><circle cx="29.1" cy="57.4" r="0.9"/><circle cx="29.1" cy="56.3" r="1.1"/><circle cx="19.0" cy="54.3" r="1.5"/><circle cx="20.0" cy="52.4" r="1.7"/><circle cx="21.0" cy="57.5" r="1.8"/><circle cx="29.6" cy="59.4" r="1.5"/><circle cx="34.3" cy="57.3" r="1.7"/><circle cx="18.6" cy="52.8" r="1.6"/><circle cx="28.8" cy="58.4" r="1.3"/><circle cx="29.5" cy="51.8" r="1.6"/><circle cx="18.2" cy="53.1" r="1.5"/><circle cx="24.8" cy="56.6" r="1.0"/><circle cx="23.0" cy="56.9" r="1.6"/><circle cx="17.6" cy="54.6" r="1.4"/><circle cx="22.0" cy="53.2" r="0.9"/><circle cx="27.2" cy="51.7" r="1.3"/><circle cx="17.0" cy="55.1" r="0.9"/><circle cx="24.3" cy="53.9" r="1.0"/><circle cx="23.8" cy="60.2" r="1.1"/><circle cx="23.7" cy="48.7" r="1.3"/><circle cx="20.1" cy="58.0" r="1.5"/><circle cx="25.4" cy="52.3" r="1.5"/><circle cx="27.3" cy="56.7" r="1.1"/><circle cx="24.4" cy="53.7" r="1.4"/><circle cx="26.5" cy="56.0" r="1.1"/><circle cx="20.8" cy="52.4" r="1.5"/><circle cx="23.0" cy="59.0" r="1.3"/><circle cx="22.0" cy="56.2" r="1.7"/><circle cx="29.2" cy="62.9" r="1.7"/><circle cx="30.5" cy="56.3" r="1.6"/><circle cx="30.3" cy="55.4" r="1.1"/><circle cx="27.8" cy="62.2" r="1.1"/><circle cx="22.1" cy="55.2" r="1.3"/><circle cx="27.3" cy="55.5" r="1.6"/><circle cx="18.2" cy="55.6" r="1.1"/><circle cx="29.5" cy="54.1" r="0.9"/><circle cx="30.8" cy="56.0" r="1.3"/><circle cx="23.7" cy="57.3" r="1.2"/><circle cx="122.3" cy="61.5" r="0.9"/><circle cx="125.9" cy="51.8" r="1.0"/><circle cx="132.4" cy="55.0" r="1.7"/><circle cx="124.8" cy="59.3" r="1.2"/><circle cx="132.0" cy="56.8" r="1.2"/><circle cx="122.6" cy="57.8" r="0.9"/><circle cx="132.9" cy="59.8" r="1.1"/><circle cx="129.1" cy="56.0" r="1.1"/><circle cx="122.9" cy="56.7" r="1.2"/><circle cx="135.1" cy="55.3" r="1.6"/><circle cx="119.0" cy="52.5" r="1.7"/><circle cx="118.9" cy="55.5" r="0.9"/><circle cx="125.3" cy="53.9" r="1.6"/><circle cx="123.6" cy="55.1" r="0.9"/><circle cx="128.0" cy="56.2" r="1.3"/><circle cx="123.7" cy="58.7" r="1.5"/><circle cx="129.4" cy="56.5" r="1.5"/><circle cx="124.0" cy="60.1" r="1.2"/><circle cx="127.2" cy="58.2" r="1.1"/><circle cx="130.4" cy="55.1" r="1.1"/><circle cx="138.8" cy="51.9" r="1.3"/><circle cx="127.8" cy="58.2" r="1.0"/><circle cx="124.8" cy="57.8" r="1.1"/><circle cx="125.6" cy="60.3" r="1.7"/><circle cx="125.9" cy="54.1" r="1.3"/><circle cx="121.5" cy="56.4" r="1.2"/><circle cx="129.3" cy="57.6" r="1.7"/><circle cx="129.7" cy="59.1" r="1.4"/><circle cx="128.0" cy="55.4" r="1.1"/><circle cx="125.9" cy="59.5" r="1.3"/><circle cx="134.5" cy="55.4" r="1.7"/><circle cx="127.1" cy="56.9" r="1.5"/><circle cx="130.0" cy="55.0" r="1.4"/><circle cx="130.5" cy="56.8" r="1.7"/><circle cx="130.0" cy="52.2" r="1.7"/><circle cx="125.9" cy="58.1" r="1.0"/><circle cx="119.0" cy="56.3" r="1.7"/><circle cx="124.7" cy="53.1" r="1.6"/><circle cx="120.3" cy="57.7" r="0.9"/><circle cx="126.6" cy="54.9" r="1.7"/><circle cx="123.5" cy="55.0" r="1.0"/><circle cx="125.8" cy="60.6" r="1.5"/><circle cx="127.2" cy="57.5" r="1.3"/><circle cx="121.9" cy="55.5" r="1.1"/><circle cx="125.3" cy="56.6" r="1.2"/><circle cx="120.7" cy="58.5" r="1.7"/><circle cx="122.6" cy="57.1" r="1.1"/><circle cx="132.9" cy="55.8" r="1.2"/><circle cx="131.2" cy="57.3" r="1.5"/><circle cx="122.8" cy="57.8" r="1.5"/><circle cx="128.8" cy="56.0" r="0.9"/><circle cx="123.4" cy="59.2" r="1.5"/><circle cx="128.5" cy="61.3" r="1.5"/><circle cx="122.8" cy="56.8" r="1.7"/><circle cx="122.7" cy="61.4" r="1.1"/><circle cx="127.3" cy="61.3" r="1.1"/><circle cx="131.0" cy="55.9" r="1.1"/><circle cx="126.7" cy="59.6" r="1.5"/><circle cx="128.3" cy="56.4" r="1.2"/><circle cx="128.8" cy="63.8" r="1.0"/><circle cx="127.4" cy="57.1" r="1.2"/><circle cx="133.5" cy="53.5" r="1.5"/><circle cx="136.5" cy="56.7" r="1.2"/><circle cx="130.1" cy="62.6" r="1.5"/><circle cx="132.6" cy="57.6" r="1.2"/></g><rect x="1.4" y="106.6" width="8" height=".8" fill="#b4b4b4"/><rect x="1.4" y="110" width="36" height=".9" fill="#9aa8b8"/><rect x="1.4" y="112.2" width="18" height=".8" fill="#b4b4b4"/><rect x="69" y="106.6" width="8" height=".8" fill="#b4b4b4"/><rect x="81" y="110.6" width="6" height=".8" fill="#c4c4c4"/><path d="M70,114 a5,4 0 0 1 10,0" fill="none" stroke="#ddd" stroke-width=".4"/><rect x="138" y="106.6" width="14" height=".8" fill="#b4b4b4"/><rect x="138" y="109.4" width="1.6" height="1.6" fill="#2b8fd6"/><rect x="140.4" y="109.8" width="44" height=".9" fill="#a8a8a8"/><rect x="138" y="111.9" width="1.6" height="1.6" fill="#e8456f"/><rect x="140.4" y="112.3" width="41" height=".9" fill="#a8a8a8"/><rect x="138" y="114.4" width="1.6" height="1.6" fill="#f5a623"/><rect x="140.4" y="114.8" width="38" height=".9" fill="#a8a8a8"/></svg></div><svg style="left:0;top:0" width="40" height="158" viewBox="0 0 40 158"><g fill="#3db60c"><rect x="11.8" y="125" width="4.2" height="13"/><rect x="17.7" y="128.8" width="4.1" height="9.2"/><rect x="23" y="122.9" width="4.1" height="15.1"/></g></svg><span class="nm">report 5</span><svg class="rate" style="left:0;top:0" width="100" height="158" viewBox="0 0 100 158"><g fill="#333"><polygon points="19.05,142.50 20.52,145.58 23.90,146.02 21.43,148.37 22.05,151.73 19.05,150.10 16.05,151.73 16.67,148.37 14.20,146.02 17.58,145.58"/><polygon points="32.95,142.50 34.42,145.58 37.80,146.02 35.33,148.37 35.95,151.73 32.95,150.10 29.95,151.73 30.57,148.37 28.10,146.02 31.48,145.58"/><polygon points="46.85,142.50 48.32,145.58 51.70,146.02 49.23,148.37 49.85,151.73 46.85,150.10 43.85,151.73 44.47,148.37 42.00,146.02 45.38,145.58"/><polygon points="60.75,142.50 62.22,145.58 65.60,146.02 63.13,148.37 63.75,151.73 60.75,150.10 57.75,151.73 58.37,148.37 55.90,146.02 59.28,145.58"/><polygon points="74.65,142.50 76.12,145.58 79.50,146.02 77.03,148.37 77.65,151.73 74.65,150.10 71.65,151.73 72.27,148.37 69.80,146.02 73.18,145.58"/></g></svg><svg class="act" style="left:0;top:0" width="210" height="158" viewBox="0 0 210 158"><g fill="#efefef"><rect x="149" y="130" width="3.2" height="3.2"/><rect x="149" y="136" width="3.2" height="3.2"/><rect x="149" y="142" width="3.2" height="3.2"/></g><path d="M186.4,132.6 V130 Q186.4,129.4 187,129.4 H196 Q196.6,129.4 196.6,130 V143 Q196.6,143.6 196,143.6 H187 Q186.4,143.6 186.4,143 V140.4" fill="none" stroke="#d0d0d0" stroke-width="1.1"/><rect x="190.8" y="131.4" width="4.2" height="10.4" fill="#bdbdbd"/><path d="M181.4,136.5 H188.4 M185,132.8 L181.3,136.5 L185,140.2" fill="none" stroke="#4ba3d4" stroke-width="1.2"/></svg></div>
<div class="card" style="left:526px;top:439px"><div class="th"><svg style="left:0;top:0" width="206" height="116" viewBox="0 0 206 116"><g fill="#f9c846" transform="translate(76.6,31.5)"><ellipse cx="26.5" cy="10.1" rx="26.5" ry="10.1"/><path d="M0,17 A26.5,8 0 0 0 53,17 L53,27.5 A26.5,8.6 0 0 1 0,27.5 Z"/><path d="M0,33.5 A26.5,8 0 0 0 53,33.5 L53,43 A26.5,10.1 0 0 1 0,43 Z"/></g></svg></div><svg style="left:0;top:0" width="40" height="158" viewBox="0 0 40 158"><g fill="#fbbc05" transform="translate(12.4,123.6) scale(0.264)"><ellipse cx="26.5" cy="10.1" rx="26.5" ry="10.1"/><path d="M0,17 A26.5,8 0 0 0 53,17 L53,27.5 A26.5,8.6 0 0 1 0,27.5 Z"/><path d="M0,33.5 A26.5,8 0 0 0 53,33.5 L53,43 A26.5,10.1 0 0 1 0,43 Z"/></g></svg><span class="nm" style="letter-spacing:-.2px">Sales Data demo</span><svg class="rate" style="left:0;top:0" width="100" height="158" viewBox="0 0 100 158"><g fill="#333"><polygon points="19.05,142.50 20.52,145.58 23.90,146.02 21.43,148.37 22.05,151.73 19.05,150.10 16.05,151.73 16.67,148.37 14.20,146.02 17.58,145.58"/><polygon points="32.95,142.50 34.42,145.58 37.80,146.02 35.33,148.37 35.95,151.73 32.95,150.10 29.95,151.73 30.57,148.37 28.10,146.02 31.48,145.58"/><polygon points="46.85,142.50 48.32,145.58 51.70,146.02 49.23,148.37 49.85,151.73 46.85,150.10 43.85,151.73 44.47,148.37 42.00,146.02 45.38,145.58"/><polygon points="60.75,142.50 62.22,145.58 65.60,146.02 63.13,148.37 63.75,151.73 60.75,150.10 57.75,151.73 58.37,148.37 55.90,146.02 59.28,145.58"/><polygon points="74.65,142.50 76.12,145.58 79.50,146.02 77.03,148.37 77.65,151.73 74.65,150.10 71.65,151.73 72.27,148.37 69.80,146.02 73.18,145.58"/></g></svg><svg class="act" style="left:0;top:0" width="210" height="158" viewBox="0 0 210 158"><g fill="#efefef"><rect x="149" y="130" width="3.2" height="3.2"/><rect x="149" y="136" width="3.2" height="3.2"/><rect x="149" y="142" width="3.2" height="3.2"/></g><path d="M186.4,132.6 V130 Q186.4,129.4 187,129.4 H196 Q196.6,129.4 196.6,130 V143 Q196.6,143.6 196,143.6 H187 Q186.4,143.6 186.4,143 V140.4" fill="none" stroke="#d0d0d0" stroke-width="1.1"/><rect x="190.8" y="131.4" width="4.2" height="10.4" fill="#bdbdbd"/><path d="M181.4,136.5 H188.4 M185,132.8 L181.3,136.5 L185,140.2" fill="none" stroke="#4ba3d4" stroke-width="1.2"/></svg></div>
<div class="card sel" style="left:745px;top:439px"><div class="th"><svg style="left:0;top:0" width="206" height="116" viewBox="0 0 206 116"><rect x="80.3" y="31" width="45.4" height="54" rx="6" fill="#f3f4f4" stroke="#d9d9d9" stroke-width="4"/><rect x="86.4" y="37.4" width="33.1" height="12.5" fill="#e8c197"/><rect x="86.4" y="58.0" width="8.6" height="4.2" fill="#e8c197"/><rect x="99.0" y="58.0" width="8.2" height="4.2" fill="#e8c197"/><rect x="111.2" y="58.0" width="8.3" height="4.2" fill="#e8c197"/><rect x="86.4" y="66.1" width="8.6" height="4.2" fill="#e8c197"/><rect x="99.0" y="66.1" width="8.2" height="4.2" fill="#e8c197"/><rect x="111.2" y="66.1" width="8.3" height="4.2" fill="#e8c197"/><rect x="86.4" y="74.4" width="8.6" height="4.2" fill="#e8c197"/><rect x="99.0" y="74.4" width="8.2" height="4.2" fill="#e8c197"/><rect x="111.2" y="74.4" width="8.3" height="4.2" fill="#e8c197"/></svg></div><div class="opn"></div><span class="fx">fx</span><span class="nm">simple rank</span><svg class="rate" style="left:0;top:0" width="100" height="158" viewBox="0 0 100 158"><g fill="#333"><polygon points="19.05,142.50 20.52,145.58 23.90,146.02 21.43,148.37 22.05,151.73 19.05,150.10 16.05,151.73 16.67,148.37 14.20,146.02 17.58,145.58"/><polygon points="32.95,142.50 34.42,145.58 37.80,146.02 35.33,148.37 35.95,151.73 32.95,150.10 29.95,151.73 30.57,148.37 28.10,146.02 31.48,145.58"/><polygon points="46.85,142.50 48.32,145.58 51.70,146.02 49.23,148.37 49.85,151.73 46.85,150.10 43.85,151.73 44.47,148.37 42.00,146.02 45.38,145.58"/><polygon points="60.75,142.50 62.22,145.58 65.60,146.02 63.13,148.37 63.75,151.73 60.75,150.10 57.75,151.73 58.37,148.37 55.90,146.02 59.28,145.58"/><polygon points="74.65,142.50 76.12,145.58 79.50,146.02 77.03,148.37 77.65,151.73 74.65,150.10 71.65,151.73 72.27,148.37 69.80,146.02 73.18,145.58"/></g></svg><svg class="act" style="left:0;top:0" width="210" height="158" viewBox="0 0 210 158"><g fill="#efefef"><rect x="149" y="130" width="3.2" height="3.2"/><rect x="149" y="136" width="3.2" height="3.2"/><rect x="149" y="142" width="3.2" height="3.2"/></g><path d="M186.4,132.6 V130 Q186.4,129.4 187,129.4 H196 Q196.6,129.4 196.6,130 V143 Q196.6,143.6 196,143.6 H187 Q186.4,143.6 186.4,143 V140.4" fill="none" stroke="#d0d0d0" stroke-width="1.1"/><rect x="190.8" y="131.4" width="4.2" height="10.4" fill="#bdbdbd"/><path d="M181.4,136.5 H188.4 M185,132.8 L181.3,136.5 L185,140.2" fill="none" stroke="#4ba3d4" stroke-width="1.2"/></svg><div class="ring"></div></div>
</main>
<div class="box" style="left:13px;top:46px;width:60px;height:376px;border-color:#ff4040"></div>
<div class="box" style="left:71px;top:43px;width:196px;height:66px;border-color:#eaff00"></div>
<div class="box" style="left:272px;top:43px;width:667px;height:62px;border-color:#00ff00"></div>
<div class="box" style="left:943px;top:47px;width:198px;height:56px;border-color:#cc66ff"></div>
<svg id="arrows" style="left:0;top:0" width="200" height="847" viewBox="0 0 200 847">
<defs><filter id="sh" x="-20%" y="-60%" width="140%" height="260%"><feDropShadow dx="2" dy="3" stdDeviation="2" flood-color="#000" flood-opacity=".5"/></filter></defs>
<g filter="url(#sh)"><path fill="#cc66ff" d="M62.4,312 L74,306.1 V310 H127 A2,2 0 0 1 127,314 H74 V317.9 Z"/></g>
<g filter="url(#sh)"><path fill="#5cb0ff" d="M62.4,351 L74,345.1 V349 H123 A2,2 0 0 1 123,353 H74 V356.9 Z"/></g>
<g filter="url(#sh)"><path fill="#00ff00" d="M63.4,738 L75.2,732.1 V736 H114 A2,2 0 0 1 114,740 H75.2 V743.9 Z"/></g>
</svg>
</body>
</html>
